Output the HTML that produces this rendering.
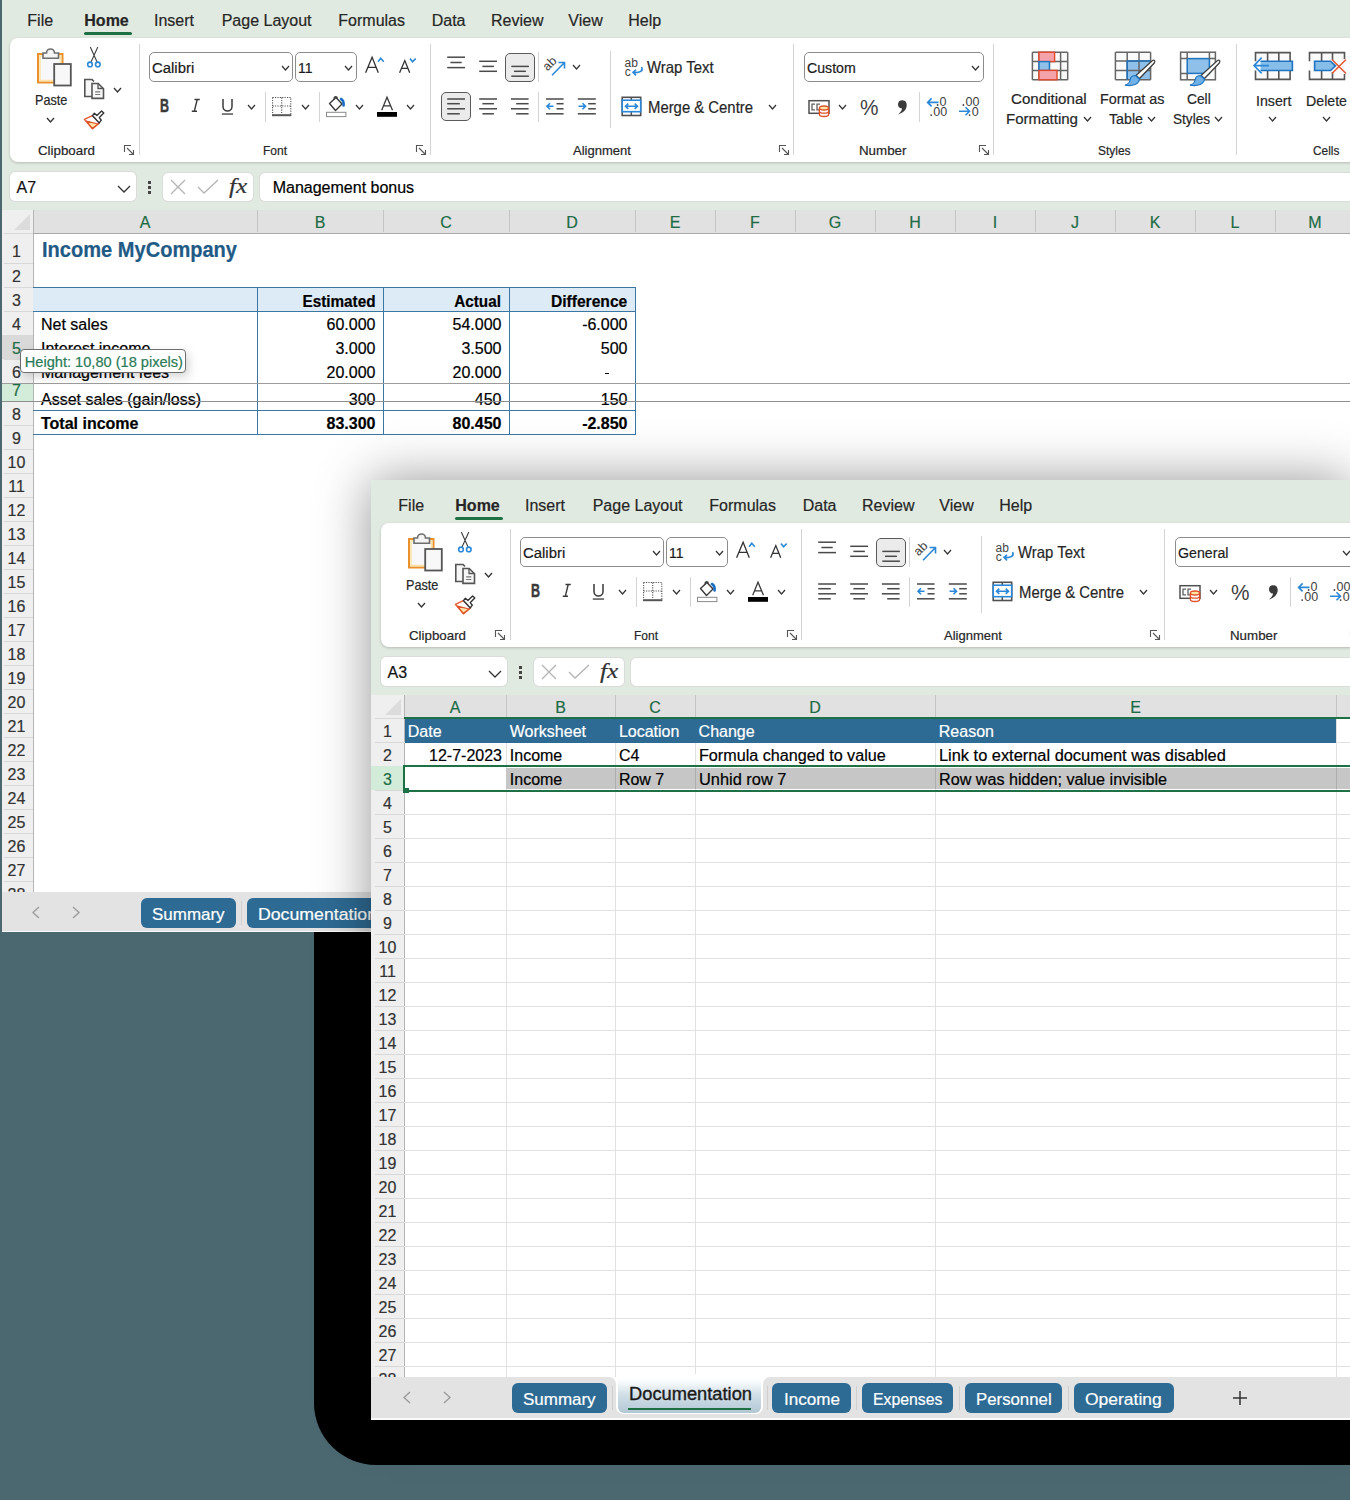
<!DOCTYPE html><html><head><meta charset="utf-8"><style>
html,body{margin:0;padding:0;}
body{width:1350px;height:1500px;overflow:hidden;position:relative;background:#4b6870;font-family:"Liberation Sans", sans-serif;}
.t{position:absolute;white-space:nowrap;-webkit-text-stroke:0.2px currentColor;}
.r{position:absolute;}
.s{position:absolute;overflow:visible;}
.win{position:absolute;overflow:hidden;}
</style></head><body><div class="r" style="left:314px;top:700px;width:1200px;height:765px;background:#000;border-bottom-left-radius:62px;"></div><div class="win" style="left:0;top:0;width:1350px;height:932px;"><div class="r" style="left:0px;top:-10px;width:1400px;height:942px;background:#e1eae0;"></div><div class="t" style="top:12.96px;font-size:16px;line-height:16px;color:#262626;left:27.30px;">File</div><div class="t" style="top:12.96px;font-size:16px;line-height:16px;color:#262626;font-weight:bold;left:84.30px;">Home</div><div class="t" style="top:12.96px;font-size:16px;line-height:16px;color:#262626;left:154.00px;">Insert</div><div class="t" style="top:12.96px;font-size:16px;line-height:16px;color:#262626;left:221.70px;">Page Layout</div><div class="t" style="top:12.96px;font-size:16px;line-height:16px;color:#262626;left:338.30px;">Formulas</div><div class="t" style="top:12.96px;font-size:16px;line-height:16px;color:#262626;left:431.70px;">Data</div><div class="t" style="top:12.96px;font-size:16px;line-height:16px;color:#262626;left:491.00px;">Review</div><div class="t" style="top:12.96px;font-size:16px;line-height:16px;color:#262626;left:568.30px;">View</div><div class="t" style="top:12.96px;font-size:16px;line-height:16px;color:#262626;left:628.30px;">Help</div><div class="r" style="left:84px;top:32px;width:48px;height:3px;background:#1e7145;border-radius:2px;"></div><div class="r" style="left:10px;top:38px;width:1400px;height:124px;background:#fff;border-radius:8px;box-shadow:0 1px 3px rgba(0,0,0,0.2);"></div><div class="t" style="top:143.80px;font-size:13px;line-height:13px;color:#262626;left:37.50px;transform:scaleX(1.0244);transform-origin:0 0;">Clipboard</div><div class="t" style="top:143.80px;font-size:13px;line-height:13px;color:#262626;left:262.70px;transform:scaleX(0.9227);transform-origin:0 0;">Font</div><div class="t" style="top:143.80px;font-size:13px;line-height:13px;color:#262626;left:573.00px;transform:scaleX(0.9999);transform-origin:0 0;">Alignment</div><div class="t" style="top:143.80px;font-size:13px;line-height:13px;color:#262626;left:859.20px;transform:scaleX(1.0252);transform-origin:0 0;">Number</div><div class="t" style="top:143.80px;font-size:13px;line-height:13px;color:#262626;left:1098.00px;transform:scaleX(0.9181);transform-origin:0 0;">Styles</div><div class="t" style="top:143.80px;font-size:13px;line-height:13px;color:#262626;left:1313.40px;transform:scaleX(0.9102);transform-origin:0 0;">Cells</div><div class="r" style="left:138.6px;top:44px;width:1px;height:111px;background:#d4d4d4;"></div><div class="r" style="left:430px;top:44px;width:1px;height:111px;background:#d4d4d4;"></div><div class="r" style="left:793px;top:44px;width:1px;height:111px;background:#d4d4d4;"></div><div class="r" style="left:1236.4px;top:44px;width:1px;height:111px;background:#d4d4d4;"></div><svg class="s" style="left:124px;top:145px;" width="11" height="11" viewBox="0 0 11 11"><path d="M0.5,7 V0.5 H7" fill="none" stroke="#555" stroke-width="1.1"/><path d="M3,3 L9.5,9.5 M9.5,5 V9.5 H5" fill="none" stroke="#555" stroke-width="1.1"/></svg><svg class="s" style="left:416px;top:145px;" width="11" height="11" viewBox="0 0 11 11"><path d="M0.5,7 V0.5 H7" fill="none" stroke="#555" stroke-width="1.1"/><path d="M3,3 L9.5,9.5 M9.5,5 V9.5 H5" fill="none" stroke="#555" stroke-width="1.1"/></svg><svg class="s" style="left:779px;top:145px;" width="11" height="11" viewBox="0 0 11 11"><path d="M0.5,7 V0.5 H7" fill="none" stroke="#555" stroke-width="1.1"/><path d="M3,3 L9.5,9.5 M9.5,5 V9.5 H5" fill="none" stroke="#555" stroke-width="1.1"/></svg><svg class="s" style="left:979px;top:145px;" width="11" height="11" viewBox="0 0 11 11"><path d="M0.5,7 V0.5 H7" fill="none" stroke="#555" stroke-width="1.1"/><path d="M3,3 L9.5,9.5 M9.5,5 V9.5 H5" fill="none" stroke="#555" stroke-width="1.1"/></svg><svg class="s" style="left:35px;top:46px;" width="38" height="42" viewBox="0 0 38 42"><rect x="3" y="8" width="24.5" height="28.5" fill="#f8f8fa" stroke="#e8912d" stroke-width="2"/><rect x="5" y="10" width="20.5" height="24.5" fill="none" stroke="#fde3a4" stroke-width="1.5"/><path d="M8,12.3 V7 H11.5 A4,4 0 0 1 19.5,7 H23.5 V12.3 Z" fill="#f4f4f4" stroke="#6e6e6e" stroke-width="1.6"/><rect x="19.2" y="18" width="16.6" height="21.5" fill="#f8f8f8" stroke="#555" stroke-width="1.8"/></svg><div class="t" style="top:93.23px;font-size:14.5px;line-height:14.5px;color:#262626;left:35.10px;transform:scaleX(0.8739);transform-origin:0 0;">Paste</div><svg class="s" style="left:46.0px;top:116.5px;" width="9" height="6" viewBox="0 0 9 6"><polyline points="1,1 4.5,5 8,1" fill="none" stroke="#333" stroke-width="1.3"/></svg><svg class="s" style="left:85px;top:45px;" width="16" height="24" viewBox="0 0 16 24"><path d="M5.3,2 L12.3,17.5 M12.8,2 L5.8,17.5" stroke="#404040" stroke-width="1.1" fill="none"/><circle cx="5" cy="19.4" r="2.3" fill="#fff" stroke="#2b88d8" stroke-width="1.6"/><circle cx="12.8" cy="19.4" r="2.3" fill="#fff" stroke="#2b88d8" stroke-width="1.6"/></svg><svg class="s" style="left:82px;top:77px;" width="24" height="24" viewBox="0 0 24 24"><path d="M10.5,19.5 H2.8 V2.5 H10 L12,4.5" fill="#f7f7f7" stroke="#555" stroke-width="1.6"/><path d="M10,6.5 H16.2 L21.5,11.8 V21.4 H10 Z" fill="#f7f7f7" stroke="#555" stroke-width="1.6"/><path d="M16,6.5 V11.5 H21.5" fill="none" stroke="#555" stroke-width="1.3"/><path d="M13.2,14.8 H18.3 M13.2,17.5 H18.3" stroke="#777" stroke-width="1.2"/></svg><svg class="s" style="left:112.8px;top:87.0px;" width="9" height="6" viewBox="0 0 9 6"><polyline points="1,1 4.5,5 8,1" fill="none" stroke="#333" stroke-width="1.3"/></svg><svg class="s" style="left:80px;top:106px;" width="26" height="26" viewBox="0 0 26 26"><path d="M4.4,13.3 L12.4,9.6 L19.3,16.9 L12.4,22.9 Z" fill="#fff" stroke="#e4572e" stroke-width="1.3" stroke-linejoin="round"/><path d="M6.3,15.2 L18.2,18 L12.4,22.3 Z" fill="#fde3a4" stroke="#e0502a" stroke-width="1.2" stroke-linejoin="round"/><path d="M12.4,9.6 L14.4,7.3 L16.9,9.6 L21.6,5.1 L23.8,7.1 L19.3,11.6 L21.3,14.2 L19.3,16.9 Z" fill="#fff" stroke="#333" stroke-width="1.4" stroke-linejoin="round"/></svg><div class="r" style="left:149px;top:52px;width:144px;height:30px;background:#fff;border:1px solid #8c8c8c;border-radius:5px;box-sizing:border-box;"></div><div class="t" style="top:60.38px;font-size:15.5px;line-height:15.5px;color:#1a1a1a;left:152.20px;transform:scaleX(0.9607);transform-origin:0 0;">Calibri</div><svg class="s" style="left:281.0px;top:64.5px;" width="9" height="6" viewBox="0 0 9 6"><polyline points="1,1 4.5,5 8,1" fill="none" stroke="#333" stroke-width="1.2"/></svg><div class="r" style="left:295px;top:52px;width:62px;height:30px;background:#fff;border:1px solid #8c8c8c;border-radius:5px;box-sizing:border-box;"></div><div class="t" style="top:60.38px;font-size:15.5px;line-height:15.5px;color:#1a1a1a;left:298.40px;transform:scaleX(0.9013);transform-origin:0 0;">11</div><svg class="s" style="left:344.4px;top:64.5px;" width="9" height="6" viewBox="0 0 9 6"><polyline points="1,1 4.5,5 8,1" fill="none" stroke="#333" stroke-width="1.2"/></svg><svg class="s" style="left:363px;top:55px;" width="24" height="20" viewBox="0 0 24 20"><path d="M2.6,17.8 L9.1,2.3 L15.3,17.8 M5,12.4 H13.2" fill="none" stroke="#333" stroke-width="1.3"/><path d="M15.1,6.7 L17.7,3.3 L20.8,6.7" fill="none" stroke="#2b88d8" stroke-width="1.6"/></svg><svg class="s" style="left:397px;top:55px;" width="22" height="20" viewBox="0 0 22 20"><path d="M2.6,17.8 L7.8,5.6 L12.7,17.8 M4.6,13.4 H10.8" fill="none" stroke="#333" stroke-width="1.3"/><path d="M13,3.6 L15.5,6.7 L18.7,3.6" fill="none" stroke="#2b88d8" stroke-width="1.6"/></svg><div class="t" style="top:96.94px;font-size:18.5px;line-height:18.5px;color:#3a3a3a;font-weight:bold;left:159.80px;transform:scaleX(0.6736);transform-origin:0 0;-webkit-text-stroke:0.5px #3a3a3a;">B</div><svg class="s" style="left:188px;top:96px;" width="14" height="18" viewBox="0 0 14 18"><path d="M6.5,3.5 H11.8 M3.8,15.3 H9 M9.2,3.5 L6.3,15.3" fill="none" stroke="#3a3a3a" stroke-width="1.4"/></svg><svg class="s" style="left:220px;top:97px;" width="15" height="19" viewBox="0 0 15 19"><path d="M3,2 V9.5 A4.5,4.5 0 0 0 12,9.5 V2" fill="none" stroke="#3a3a3a" stroke-width="1.5"/><rect x="1.8" y="16.3" width="11.3" height="1.5" fill="#555"/></svg><svg class="s" style="left:246.9px;top:103.8px;" width="9" height="6" viewBox="0 0 9 6"><polyline points="1,1 4.5,5 8,1" fill="none" stroke="#333" stroke-width="1.2"/></svg><div class="r" style="left:264.5px;top:92px;width:1px;height:30px;background:#d4d4d4;"></div><svg class="s" style="left:271px;top:96px;" width="22" height="21" viewBox="0 0 22 21"><path d="M1.6,1.5 H19.8 V18.5 M1.6,1.5 V18.5 M10.7,1.5 V18.5 M1.6,10 H19.8" fill="none" stroke="#555" stroke-width="1.1" stroke-dasharray="1.2,1.2"/><rect x="1" y="18.2" width="19.4" height="2" fill="#555"/></svg><svg class="s" style="left:300.9px;top:103.8px;" width="9" height="6" viewBox="0 0 9 6"><polyline points="1,1 4.5,5 8,1" fill="none" stroke="#333" stroke-width="1.2"/></svg><div class="r" style="left:318.6px;top:92px;width:1px;height:30px;background:#d4d4d4;"></div><svg class="s" style="left:325px;top:95px;" width="23" height="23" viewBox="0 0 23 23"><path d="M4.5,8.5 L11,2.5 L17,9 L10.5,15.5 Z" fill="#fff" stroke="#3a3a3a" stroke-width="1.4" stroke-linejoin="round"/><path d="M9.5,4.5 C8,1.5 11.5,0.5 12.5,3.5" fill="none" stroke="#3a3a3a" stroke-width="1.3"/><path d="M16,4 C18,5 18.8,7 18.6,10.5" fill="none" stroke="#1a6fc4" stroke-width="2.6" stroke-linecap="round"/><rect x="1.5" y="17.3" width="19.4" height="4.3" fill="#fff" stroke="#8a8a8a" stroke-width="1"/></svg><svg class="s" style="left:354.9px;top:103.8px;" width="9" height="6" viewBox="0 0 9 6"><polyline points="1,1 4.5,5 8,1" fill="none" stroke="#333" stroke-width="1.2"/></svg><svg class="s" style="left:376px;top:95px;" width="22" height="23" viewBox="0 0 22 23"><path d="M5.7,15.3 L11,2.3 L16.5,15.3 M7.6,10.8 H14.6" fill="none" stroke="#3a3a3a" stroke-width="1.3"/><rect x="1" y="17" width="20" height="4.8" fill="#000"/></svg><svg class="s" style="left:405.8px;top:103.8px;" width="9" height="6" viewBox="0 0 9 6"><polyline points="1,1 4.5,5 8,1" fill="none" stroke="#333" stroke-width="1.2"/></svg><div class="r" style="left:505.3px;top:52.5px;width:29.3px;height:29px;background:#ebebeb;border:1px solid #5a5a5a;border-radius:5px;box-sizing:border-box;"></div><div class="r" style="left:441.3px;top:92.4px;width:29.3px;height:29.1px;background:#ebebeb;border:1px solid #5a5a5a;border-radius:5px;box-sizing:border-box;"></div><svg class="s" style="left:0px;top:0px;pointer-events:none;" width="800" height="130" viewBox="0 0 800 130"><rect x="447.20" y="56.45" width="17.80" height="1.5" fill="#4a4a4a"/><rect x="450.40" y="61.75" width="11.30" height="1.5" fill="#4a4a4a"/><rect x="447.20" y="66.85" width="17.80" height="1.5" fill="#4a4a4a"/><rect x="479.20" y="60.55" width="17.80" height="1.5" fill="#4a4a4a"/><rect x="482.40" y="65.65" width="11.50" height="1.5" fill="#4a4a4a"/><rect x="479.20" y="70.55" width="17.80" height="1.5" fill="#4a4a4a"/><rect x="511.30" y="65.65" width="17.60" height="1.5" fill="#4a4a4a"/><rect x="514.00" y="70.55" width="11.90" height="1.5" fill="#4a4a4a"/><rect x="511.30" y="75.45" width="17.60" height="1.5" fill="#4a4a4a"/><rect x="447.20" y="98.25" width="17.80" height="1.5" fill="#4a4a4a"/><rect x="447.20" y="102.95" width="12.60" height="1.5" fill="#4a4a4a"/><rect x="447.20" y="108.05" width="17.80" height="1.5" fill="#4a4a4a"/><rect x="447.20" y="113.05" width="12.60" height="1.5" fill="#4a4a4a"/><rect x="479.20" y="98.25" width="17.80" height="1.5" fill="#4a4a4a"/><rect x="482.40" y="102.95" width="11.50" height="1.5" fill="#4a4a4a"/><rect x="479.20" y="108.05" width="17.80" height="1.5" fill="#4a4a4a"/><rect x="482.40" y="113.05" width="11.50" height="1.5" fill="#4a4a4a"/><rect x="510.90" y="98.25" width="17.70" height="1.5" fill="#4a4a4a"/><rect x="516.20" y="102.95" width="12.40" height="1.5" fill="#4a4a4a"/><rect x="510.90" y="108.05" width="17.70" height="1.5" fill="#4a4a4a"/><rect x="516.20" y="113.05" width="12.40" height="1.5" fill="#4a4a4a"/><rect x="546.00" y="98.25" width="17.60" height="1.5" fill="#4a4a4a"/><rect x="556.50" y="102.95" width="7.10" height="1.5" fill="#4a4a4a"/><rect x="556.50" y="108.05" width="7.10" height="1.5" fill="#4a4a4a"/><rect x="546.00" y="113.05" width="17.60" height="1.5" fill="#4a4a4a"/><rect x="577.80" y="98.25" width="18.00" height="1.5" fill="#4a4a4a"/><rect x="588.20" y="102.95" width="7.60" height="1.5" fill="#4a4a4a"/><rect x="588.20" y="108.05" width="7.60" height="1.5" fill="#4a4a4a"/><rect x="577.80" y="113.05" width="18.00" height="1.5" fill="#4a4a4a"/><path d="M553.5,106.2 H547 M550,103.2 L547,106.2 L550,109.2" fill="none" stroke="#2b88d8" stroke-width="1.6"/><path d="M578.5,106.2 H585.5 M582.5,103.2 L585.5,106.2 L582.5,109.2" fill="none" stroke="#2b88d8" stroke-width="1.6"/><path d="M552,75.3 L564.5,62.5 M558.5,62.5 H564.5 V68.5" fill="none" stroke="#2b88d8" stroke-width="1.6"/><text x="0" y="0" transform="translate(547.5,71.5) rotate(-45)" font-family="Liberation Sans" font-size="12.5" fill="#444">ab</text></svg><div class="r" style="left:537.5px;top:52px;width:1px;height:30px;background:#d4d4d4;"></div><div class="r" style="left:537.5px;top:92px;width:1px;height:30px;background:#d4d4d4;"></div><svg class="s" style="left:571.8px;top:63.5px;" width="9" height="6" viewBox="0 0 9 6"><polyline points="1,1 4.5,5 8,1" fill="none" stroke="#333" stroke-width="1.2"/></svg><div class="r" style="left:609.5px;top:51px;width:1px;height:77px;background:#d4d4d4;"></div><svg class="s" style="left:620px;top:52px;" width="26" height="28" viewBox="0 0 26 28"><text x="4.5" y="14.6" font-family="Liberation Sans" font-size="12" fill="#444">ab</text><text x="4.8" y="23.9" font-family="Liberation Sans" font-size="12" fill="#444">c</text><path d="M21.6,15 C23.5,19 20,21 13.5,20.5 M16,17.8 L13,20.4 L16,23.4" fill="none" stroke="#2b88d8" stroke-width="1.6"/></svg><div class="t" style="top:59.33px;font-size:16.5px;line-height:16.5px;color:#262626;left:647.20px;transform:scaleX(0.9041);transform-origin:0 0;">Wrap Text</div><svg class="s" style="left:620px;top:95px;" width="23" height="23" viewBox="0 0 23 23"><rect x="2.2" y="2.3" width="18.5" height="18.2" fill="#fff" stroke="#505050" stroke-width="1.6"/><path d="M11.3,2.3 V5.2 M11.3,16.7 V20.5" stroke="#505050" stroke-width="1.5"/><rect x="2.2" y="5.2" width="18.5" height="11.5" fill="#fff" stroke="#2b88d8" stroke-width="1.6"/><path d="M5.5,11.2 H17.5 M8.3,8.6 L5.5,11.2 L8.3,13.8 M14.7,8.6 L17.5,11.2 L14.7,13.8" fill="none" stroke="#2b88d8" stroke-width="1.6"/></svg><div class="t" style="top:99.33px;font-size:16.5px;line-height:16.5px;color:#262626;left:647.80px;transform:scaleX(0.9016);transform-origin:0 0;">Merge &amp; Centre</div><svg class="s" style="left:768.0px;top:104.3px;" width="9" height="6" viewBox="0 0 9 6"><polyline points="1,1 4.5,5 8,1" fill="none" stroke="#333" stroke-width="1.2"/></svg><div class="r" style="left:804.3px;top:52px;width:179.70000000000005px;height:30px;background:#fff;border:1px solid #8c8c8c;border-radius:5px;box-sizing:border-box;"></div><div class="t" style="top:60.38px;font-size:15.5px;line-height:15.5px;color:#1a1a1a;left:807.40px;transform:scaleX(0.9120);transform-origin:0 0;">Custom</div><svg class="s" style="left:971.3px;top:64.5px;" width="9" height="6" viewBox="0 0 9 6"><polyline points="1,1 4.5,5 8,1" fill="none" stroke="#333" stroke-width="1.2"/></svg><svg class="s" style="left:807px;top:98px;" width="24" height="21" viewBox="0 0 24 21"><rect x="2" y="2.7" width="20" height="12.6" fill="#fff" stroke="#505050" stroke-width="1.5"/><path d="M8,6.2 H5 V11.8 H8 M13,6.2 H10 V11.8 H13" fill="none" stroke="#606060" stroke-width="1.3"/><path d="M12.4,10 V16.5 A4.6,2 0 0 0 21.6,16.5 V10" fill="#fff" stroke="#e0502a" stroke-width="1.3"/><ellipse cx="17" cy="10" rx="4.6" ry="2" fill="#fde3a4" stroke="#e0502a" stroke-width="1.3"/><path d="M12.4,13.2 A4.6,2 0 0 0 21.6,13.2" fill="none" stroke="#e0502a" stroke-width="1.2"/></svg><svg class="s" style="left:837.9px;top:103.8px;" width="9" height="6" viewBox="0 0 9 6"><polyline points="1,1 4.5,5 8,1" fill="none" stroke="#333" stroke-width="1.2"/></svg><div class="t" style="top:96.88px;font-size:22px;line-height:22px;color:#404040;left:860.30px;transform:scaleX(0.9457);transform-origin:0 0;-webkit-text-stroke:0;">%</div><svg class="s" style="left:895px;top:98px;" width="14" height="19" viewBox="0 0 14 19"><path d="M7.2,2.2 C10.8,2.2 12.2,5 11.6,8.5 C11,12 8,15 3,16.5 C5.8,14 7,12.3 7,10.5 C4.2,10.5 3,8.5 3,6.3 C3,3.8 4.8,2.2 7.2,2.2 Z" fill="#3a3a3a"/></svg><div class="r" style="left:919.4px;top:92px;width:1px;height:30px;background:#d4d4d4;"></div><svg class="s" style="left:920px;top:92px;" width="65" height="28" viewBox="0 0 65 28"><text x="19.4" y="13.8" font-family="Liberation Sans" font-size="12.5" fill="#404040">0</text><text x="13.3" y="23.9" font-family="Liberation Sans" font-size="12.5" fill="#404040">00</text><text x="45.6" y="13.8" font-family="Liberation Sans" font-size="12.5" fill="#404040">00</text><text x="51.8" y="23.9" font-family="Liberation Sans" font-size="12.5" fill="#404040">0</text><circle cx="17.6" cy="13" r="0.9" fill="#404040"/><circle cx="11.2" cy="23.1" r="0.9" fill="#404040"/><circle cx="43.4" cy="13" r="0.9" fill="#404040"/><circle cx="49.6" cy="23.1" r="0.9" fill="#404040"/><path d="M18.5,10.4 H7.8 M11.6,6.4 L7.6,10.4 L11.6,14.4" fill="none" stroke="#2b88d8" stroke-width="1.6"/><path d="M39,19.3 H49.3 M45.5,15.3 L49.5,19.3 L45.5,23.3" fill="none" stroke="#2b88d8" stroke-width="1.6"/></svg><div class="r" style="left:993px;top:44px;width:1px;height:111px;background:#d4d4d4;"></div><svg class="s" style="left:0px;top:0px;pointer-events:none;" width="1350" height="100" viewBox="0 0 1350 100"><rect x="1032.4" y="52.2" width="35.3" height="27.6" fill="#fafafa"/><g stroke="#666" stroke-width="1.5" fill="none"><path d="M1032.4,52.2 V79.8"/><path d="M1039,52.2 V79.8"/><path d="M1049.4,52.2 V79.8"/><path d="M1060.6,52.2 V79.8"/><path d="M1067.7,52.2 V79.8"/><path d="M1032.4,52.2 H1067.7"/><path d="M1032.4,61.6 H1067.7"/><path d="M1032.4,70.4 H1067.7"/><path d="M1032.4,79.8 H1067.7"/></g><rect x="1039" y="52.2" width="15.6" height="9.4" fill="#f4a3aa" stroke="#e0482a" stroke-width="1.4"/><rect x="1039" y="61.6" width="10.4" height="8.8" fill="#8ec0ea" stroke="#1e73be" stroke-width="1.4"/><rect x="1039" y="70.4" width="18" height="9.4" fill="#f4a3aa" stroke="#e0482a" stroke-width="1.4"/><rect x="1115.4" y="52.2" width="35.2" height="27.6" fill="#fafafa"/><rect x="1127.2" y="61.1" width="23.4" height="18.7" fill="#8ec0ea"/><g stroke="#666" stroke-width="1.5" fill="none"><path d="M1115.4,52.2 V79.8"/><path d="M1127.2,52.2 V79.8"/><path d="M1139,52.2 V79.8"/><path d="M1150.6,52.2 V79.8"/><path d="M1115.4,52.2 H1150.6"/><path d="M1115.4,61.1 H1150.6"/><path d="M1115.4,70.4 H1150.6"/><path d="M1115.4,79.8 H1150.6"/></g><path d="M1127.2,79.8 V61.1 H1150.6" fill="none" stroke="#1e73be" stroke-width="1.5"/><path d="M1152.5,60.5 C1154.5,59.5 1155.5,61 1154.3,63 L1139.5,78.5 L1136,75.5 Z" fill="#fff" stroke="#404040" stroke-width="1.3"/><path d="M1135.5,75.5 L1139.5,79 C1139,84 1133,86.5 1125,85.2 C1129,84 1129.5,82.5 1130,80 C1130.5,77 1133,75.5 1135.5,75.5 Z" fill="#6fb0e6" stroke="#1e73be" stroke-width="1.2"/><rect x="1180.6" y="52.2" width="34.8" height="27.6" fill="#fafafa"/><rect x="1187.2" y="58.6" width="22.2" height="14.8" fill="#8ec0ea" stroke="#1e73be" stroke-width="1.5"/><g stroke="#666" stroke-width="1.5" fill="none"><rect x="1180.6" y="52.2" width="34.8" height="27.6"/><path d="M1187.2,52.2 V58.6 M1209.4,52.2 V58.6 M1180.6,58.6 H1187.2 M1209.4,58.6 H1215.4 M1180.6,73.4 H1187.2 M1187.2,73.4 V79.8"/></g><path d="M1217.5,60.5 C1219.5,59.5 1220.5,61 1219.3,63 L1204.5,78.5 L1201,75.5 Z" fill="#fff" stroke="#404040" stroke-width="1.3"/><path d="M1200.5,75.5 L1204.5,79 C1204,84 1198,86.5 1190,85.2 C1194,84 1194.5,82.5 1195,80 C1195.5,77 1198,75.5 1200.5,75.5 Z" fill="#6fb0e6" stroke="#1e73be" stroke-width="1.2"/><rect x="1255.5" y="52.6" width="34.6" height="26.8" fill="#fafafa"/><g stroke="#555" stroke-width="1.6" fill="none"><path d="M1255.5,61.2 V52.6 H1290.1 V79.4 H1255.5 V70.5 M1267.6,52.6 V79.4 M1278.8,52.6 V79.4"/></g><path d="M1260.6,61.2 H1292.4 V70.5 H1260.6" fill="#86bde9" stroke="#1f73c0" stroke-width="1.6"/><path d="M1254,65.6 H1269 M1261.7,57.6 L1254,65.6 L1261.7,73.4" fill="none" stroke="#2b88d8" stroke-width="1.6"/><rect x="1309.5" y="52.6" width="35" height="26.8" fill="#fafafa"/><g stroke="#555" stroke-width="1.6" fill="none"><path d="M1309.5,61.2 V52.6 H1344.5 V59 M1344.5,74 V79.4 H1309.5 V70.5 M1321.6,52.6 V79.4 M1332.5,52.6 V60 M1332.5,72 V79.4"/></g><path d="M1314.6,61.2 H1330.5 L1335.5,65.8 L1330.5,70.5 H1314.6 Z" fill="#86bde9" stroke="#1f73c0" stroke-width="1.6"/><path d="M1332,59.5 L1346,73.5 M1346,59.5 L1332,73.5" stroke="#e4572e" stroke-width="1.5"/></svg><div class="t" style="top:91.05px;font-size:15.3px;line-height:15.3px;color:#262626;left:1011.30px;transform:scaleX(0.9889);transform-origin:0 0;">Conditional</div><div class="t" style="top:111.25px;font-size:15.3px;line-height:15.3px;color:#262626;left:1006.00px;transform:scaleX(0.9847);transform-origin:0 0;">Formatting</div><svg class="s" style="left:1083.0px;top:116.3px;" width="9" height="6" viewBox="0 0 9 6"><polyline points="1,1 4.5,5 8,1" fill="none" stroke="#333" stroke-width="1.2"/></svg><div class="t" style="top:91.05px;font-size:15.3px;line-height:15.3px;color:#262626;left:1100.30px;transform:scaleX(0.9352);transform-origin:0 0;">Format as</div><div class="t" style="top:111.25px;font-size:15.3px;line-height:15.3px;color:#262626;left:1108.70px;transform:scaleX(0.9296);transform-origin:0 0;">Table</div><svg class="s" style="left:1146.5px;top:116.3px;" width="9" height="6" viewBox="0 0 9 6"><polyline points="1,1 4.5,5 8,1" fill="none" stroke="#333" stroke-width="1.2"/></svg><div class="t" style="top:91.05px;font-size:15.3px;line-height:15.3px;color:#262626;left:1186.60px;transform:scaleX(0.8992);transform-origin:0 0;">Cell</div><div class="t" style="top:111.25px;font-size:15.3px;line-height:15.3px;color:#262626;left:1172.60px;transform:scaleX(0.8881);transform-origin:0 0;">Styles</div><svg class="s" style="left:1213.9px;top:116.3px;" width="9" height="6" viewBox="0 0 9 6"><polyline points="1,1 4.5,5 8,1" fill="none" stroke="#333" stroke-width="1.2"/></svg><div class="t" style="top:92.85px;font-size:15.3px;line-height:15.3px;color:#262626;left:1255.50px;transform:scaleX(0.9278);transform-origin:0 0;">Insert</div><svg class="s" style="left:1268.1px;top:116.3px;" width="9" height="6" viewBox="0 0 9 6"><polyline points="1,1 4.5,5 8,1" fill="none" stroke="#333" stroke-width="1.2"/></svg><div class="t" style="top:92.85px;font-size:15.3px;line-height:15.3px;color:#262626;left:1305.50px;transform:scaleX(0.9271);transform-origin:0 0;">Delete</div><svg class="s" style="left:1322.0px;top:116.3px;" width="9" height="6" viewBox="0 0 9 6"><polyline points="1,1 4.5,5 8,1" fill="none" stroke="#333" stroke-width="1.2"/></svg><div class="r" style="left:10px;top:172px;width:126px;height:29px;background:#fff;border-radius:5px;box-shadow:0 0 0 1px #d9dcd8;"></div><div class="t" style="top:180.46px;font-size:16px;line-height:16px;color:#111;left:16.50px;">A7</div><svg class="s" style="left:117.0px;top:185.0px;" width="14" height="8" viewBox="0 0 14 8"><polyline points="1,1 7.0,7 13,1" fill="none" stroke="#333" stroke-width="1.3"/></svg><div class="r" style="left:148px;top:181px;width:3px;height:3px;background:#444;"></div><div class="r" style="left:148px;top:186px;width:3px;height:3px;background:#444;"></div><div class="r" style="left:148px;top:191px;width:3px;height:3px;background:#444;"></div><div class="r" style="left:163px;top:173px;width:90px;height:28px;background:#fff;border-radius:5px;box-shadow:0 0 0 1px #d9dcd8;"></div><svg class="s" style="left:170px;top:179px;" width="16" height="16" viewBox="0 0 16 16"><path d="M1,1 L15,15 M15,1 L1,15" stroke="#b4b4b4" stroke-width="1.3"/></svg><svg class="s" style="left:197px;top:179px;" width="22" height="16" viewBox="0 0 22 16"><path d="M1,8 L7,14 L21,1" fill="none" stroke="#b4b4b4" stroke-width="1.3"/></svg><div class="t" style="top:175.72px;font-size:21px;line-height:21px;color:#333;left:229.00px;transform:scaleX(1.2000);transform-origin:0 0;font-family:'Liberation Serif';font-style:italic;">fx</div><div class="r" style="left:260px;top:173px;width:1400px;height:28px;background:#fff;border-radius:5px;box-shadow:0 0 0 1px #d9dcd8;"></div><div class="t" style="top:179.76px;font-size:16px;line-height:16px;color:#000;left:272.70px;">Management bonus</div><div class="r" style="left:0px;top:210px;width:1400px;height:23px;background:#e1e1e1;"></div><div class="r" style="left:0px;top:210px;width:33px;height:24px;background:#efefef;"></div><svg class="s" style="left:14px;top:214px;" width="17" height="16" viewBox="0 0 17 16"><polygon points="16,0 16,16 0,16" fill="#dcdcdc"/></svg><div class="r" style="left:33px;top:233px;width:1400px;height:659px;background:#fff;"></div><div class="r" style="left:0px;top:233px;width:33px;height:659px;background:#efefef;"></div><div class="r" style="left:33px;top:210px;width:1px;height:682px;background:#b5b5b5;"></div><div class="r" style="left:4px;top:233px;width:29px;height:1px;background:#d8d8d8;"></div><div class="r" style="left:33px;top:233px;width:1400px;height:1px;background:#a8a8a8;"></div><div class="r" style="left:257px;top:210px;width:1px;height:22px;background:#c4c4c4;"></div><div class="t" style="top:215.26px;font-size:16px;line-height:16px;color:#1d6b45;left:-155.00px;width:600px;text-align:center;">A</div><div class="r" style="left:383px;top:210px;width:1px;height:22px;background:#c4c4c4;"></div><div class="t" style="top:215.26px;font-size:16px;line-height:16px;color:#1d6b45;left:20.00px;width:600px;text-align:center;">B</div><div class="r" style="left:509px;top:210px;width:1px;height:22px;background:#c4c4c4;"></div><div class="t" style="top:215.26px;font-size:16px;line-height:16px;color:#1d6b45;left:146.00px;width:600px;text-align:center;">C</div><div class="r" style="left:635px;top:210px;width:1px;height:22px;background:#c4c4c4;"></div><div class="t" style="top:215.26px;font-size:16px;line-height:16px;color:#1d6b45;left:272.00px;width:600px;text-align:center;">D</div><div class="r" style="left:715px;top:210px;width:1px;height:22px;background:#c4c4c4;"></div><div class="t" style="top:215.26px;font-size:16px;line-height:16px;color:#1d6b45;left:375.00px;width:600px;text-align:center;">E</div><div class="r" style="left:795px;top:210px;width:1px;height:22px;background:#c4c4c4;"></div><div class="t" style="top:215.26px;font-size:16px;line-height:16px;color:#1d6b45;left:455.00px;width:600px;text-align:center;">F</div><div class="r" style="left:875px;top:210px;width:1px;height:22px;background:#c4c4c4;"></div><div class="t" style="top:215.26px;font-size:16px;line-height:16px;color:#1d6b45;left:535.00px;width:600px;text-align:center;">G</div><div class="r" style="left:955px;top:210px;width:1px;height:22px;background:#c4c4c4;"></div><div class="t" style="top:215.26px;font-size:16px;line-height:16px;color:#1d6b45;left:615.00px;width:600px;text-align:center;">H</div><div class="r" style="left:1035px;top:210px;width:1px;height:22px;background:#c4c4c4;"></div><div class="t" style="top:215.26px;font-size:16px;line-height:16px;color:#1d6b45;left:695.00px;width:600px;text-align:center;">I</div><div class="r" style="left:1115px;top:210px;width:1px;height:22px;background:#c4c4c4;"></div><div class="t" style="top:215.26px;font-size:16px;line-height:16px;color:#1d6b45;left:775.00px;width:600px;text-align:center;">J</div><div class="r" style="left:1195px;top:210px;width:1px;height:22px;background:#c4c4c4;"></div><div class="t" style="top:215.26px;font-size:16px;line-height:16px;color:#1d6b45;left:855.00px;width:600px;text-align:center;">K</div><div class="r" style="left:1275px;top:210px;width:1px;height:22px;background:#c4c4c4;"></div><div class="t" style="top:215.26px;font-size:16px;line-height:16px;color:#1d6b45;left:935.00px;width:600px;text-align:center;">L</div><div class="r" style="left:1355px;top:210px;width:1px;height:22px;background:#c4c4c4;"></div><div class="t" style="top:215.26px;font-size:16px;line-height:16px;color:#1d6b45;left:1015.00px;width:600px;text-align:center;">M</div><div class="r" style="left:4px;top:263px;width:29px;height:1px;background:#d8d8d8;"></div><div class="t" style="top:244.46px;font-size:16px;line-height:16px;color:#333;left:-283.50px;width:600px;text-align:center;">1</div><div class="r" style="left:4px;top:287px;width:29px;height:1px;background:#d8d8d8;"></div><div class="t" style="top:269.46px;font-size:16px;line-height:16px;color:#333;left:-283.50px;width:600px;text-align:center;">2</div><div class="r" style="left:4px;top:311px;width:29px;height:1px;background:#d8d8d8;"></div><div class="t" style="top:293.46px;font-size:16px;line-height:16px;color:#333;left:-283.50px;width:600px;text-align:center;">3</div><div class="r" style="left:4px;top:335px;width:29px;height:1px;background:#d8d8d8;"></div><div class="t" style="top:317.46px;font-size:16px;line-height:16px;color:#333;left:-283.50px;width:600px;text-align:center;">4</div><div class="r" style="left:0px;top:335px;width:33px;height:24px;background:#d9d9d9;"></div><div class="r" style="left:4px;top:359px;width:29px;height:1px;background:#d8d8d8;"></div><div class="t" style="top:341.46px;font-size:16px;line-height:16px;color:#1d6b45;left:-283.50px;width:600px;text-align:center;">5</div><div class="r" style="left:4px;top:383px;width:29px;height:1px;background:#d8d8d8;"></div><div class="t" style="top:365.46px;font-size:16px;line-height:16px;color:#333;left:-283.50px;width:600px;text-align:center;">6</div><div class="r" style="left:0px;top:383px;width:33px;height:18px;background:#d3ebd9;"></div><div class="r" style="left:4px;top:401px;width:29px;height:1px;background:#d8d8d8;"></div><div class="t" style="top:382.96px;font-size:16px;line-height:16px;color:#1d6b45;left:-283.50px;width:600px;text-align:center;">7</div><div class="r" style="left:4px;top:425px;width:29px;height:1px;background:#d8d8d8;"></div><div class="t" style="top:407.46px;font-size:16px;line-height:16px;color:#333;left:-283.50px;width:600px;text-align:center;">8</div><div class="r" style="left:4px;top:449px;width:29px;height:1px;background:#d8d8d8;"></div><div class="t" style="top:431.46px;font-size:16px;line-height:16px;color:#333;left:-283.50px;width:600px;text-align:center;">9</div><div class="r" style="left:4px;top:473px;width:29px;height:1px;background:#d8d8d8;"></div><div class="t" style="top:455.46px;font-size:16px;line-height:16px;color:#333;left:-283.50px;width:600px;text-align:center;">10</div><div class="r" style="left:4px;top:497px;width:29px;height:1px;background:#d8d8d8;"></div><div class="t" style="top:479.46px;font-size:16px;line-height:16px;color:#333;left:-283.50px;width:600px;text-align:center;">11</div><div class="r" style="left:4px;top:521px;width:29px;height:1px;background:#d8d8d8;"></div><div class="t" style="top:503.46px;font-size:16px;line-height:16px;color:#333;left:-283.50px;width:600px;text-align:center;">12</div><div class="r" style="left:4px;top:545px;width:29px;height:1px;background:#d8d8d8;"></div><div class="t" style="top:527.46px;font-size:16px;line-height:16px;color:#333;left:-283.50px;width:600px;text-align:center;">13</div><div class="r" style="left:4px;top:569px;width:29px;height:1px;background:#d8d8d8;"></div><div class="t" style="top:551.46px;font-size:16px;line-height:16px;color:#333;left:-283.50px;width:600px;text-align:center;">14</div><div class="r" style="left:4px;top:593px;width:29px;height:1px;background:#d8d8d8;"></div><div class="t" style="top:575.46px;font-size:16px;line-height:16px;color:#333;left:-283.50px;width:600px;text-align:center;">15</div><div class="r" style="left:4px;top:617px;width:29px;height:1px;background:#d8d8d8;"></div><div class="t" style="top:599.46px;font-size:16px;line-height:16px;color:#333;left:-283.50px;width:600px;text-align:center;">16</div><div class="r" style="left:4px;top:641px;width:29px;height:1px;background:#d8d8d8;"></div><div class="t" style="top:623.46px;font-size:16px;line-height:16px;color:#333;left:-283.50px;width:600px;text-align:center;">17</div><div class="r" style="left:4px;top:665px;width:29px;height:1px;background:#d8d8d8;"></div><div class="t" style="top:647.46px;font-size:16px;line-height:16px;color:#333;left:-283.50px;width:600px;text-align:center;">18</div><div class="r" style="left:4px;top:689px;width:29px;height:1px;background:#d8d8d8;"></div><div class="t" style="top:671.46px;font-size:16px;line-height:16px;color:#333;left:-283.50px;width:600px;text-align:center;">19</div><div class="r" style="left:4px;top:713px;width:29px;height:1px;background:#d8d8d8;"></div><div class="t" style="top:695.46px;font-size:16px;line-height:16px;color:#333;left:-283.50px;width:600px;text-align:center;">20</div><div class="r" style="left:4px;top:737px;width:29px;height:1px;background:#d8d8d8;"></div><div class="t" style="top:719.46px;font-size:16px;line-height:16px;color:#333;left:-283.50px;width:600px;text-align:center;">21</div><div class="r" style="left:4px;top:761px;width:29px;height:1px;background:#d8d8d8;"></div><div class="t" style="top:743.46px;font-size:16px;line-height:16px;color:#333;left:-283.50px;width:600px;text-align:center;">22</div><div class="r" style="left:4px;top:785px;width:29px;height:1px;background:#d8d8d8;"></div><div class="t" style="top:767.46px;font-size:16px;line-height:16px;color:#333;left:-283.50px;width:600px;text-align:center;">23</div><div class="r" style="left:4px;top:809px;width:29px;height:1px;background:#d8d8d8;"></div><div class="t" style="top:791.46px;font-size:16px;line-height:16px;color:#333;left:-283.50px;width:600px;text-align:center;">24</div><div class="r" style="left:4px;top:833px;width:29px;height:1px;background:#d8d8d8;"></div><div class="t" style="top:815.46px;font-size:16px;line-height:16px;color:#333;left:-283.50px;width:600px;text-align:center;">25</div><div class="r" style="left:4px;top:857px;width:29px;height:1px;background:#d8d8d8;"></div><div class="t" style="top:839.46px;font-size:16px;line-height:16px;color:#333;left:-283.50px;width:600px;text-align:center;">26</div><div class="r" style="left:4px;top:881px;width:29px;height:1px;background:#d8d8d8;"></div><div class="t" style="top:863.46px;font-size:16px;line-height:16px;color:#333;left:-283.50px;width:600px;text-align:center;">27</div><div class="r" style="left:4px;top:905px;width:29px;height:1px;background:#d8d8d8;"></div><div class="t" style="top:887.46px;font-size:16px;line-height:16px;color:#333;left:-283.50px;width:600px;text-align:center;">28</div><div class="t" style="top:238.68px;font-size:22px;line-height:22px;color:#215a85;font-weight:bold;left:42.00px;transform:scaleX(0.9116);transform-origin:0 0;">Income MyCompany</div><div class="r" style="left:33px;top:287px;width:602px;height:24px;background:#ddebf7;"></div><div class="r" style="left:33px;top:287px;width:603px;height:1px;background:#3c76a3;"></div><div class="r" style="left:33px;top:311px;width:603px;height:1px;background:#3c76a3;"></div><div class="r" style="left:33px;top:410px;width:603px;height:1px;background:#3c76a3;"></div><div class="r" style="left:33px;top:434px;width:603px;height:1px;background:#3c76a3;"></div><div class="r" style="left:257px;top:287px;width:1px;height:148px;background:#3c76a3;"></div><div class="r" style="left:383px;top:287px;width:1px;height:148px;background:#3c76a3;"></div><div class="r" style="left:509px;top:287px;width:1px;height:148px;background:#3c76a3;"></div><div class="r" style="left:635px;top:287px;width:1px;height:148px;background:#3c76a3;"></div><div class="t" style="top:293.66px;font-size:16px;line-height:16px;color:#000;font-weight:bold;right:calc(100% - 375.30px);transform:scaleX(0.9547);transform-origin:100% 0;">Estimated</div><div class="t" style="top:293.66px;font-size:16px;line-height:16px;color:#000;font-weight:bold;right:calc(100% - 501.30px);transform:scaleX(0.9531);transform-origin:100% 0;">Actual</div><div class="t" style="top:293.66px;font-size:16px;line-height:16px;color:#000;font-weight:bold;right:calc(100% - 627.30px);transform:scaleX(0.9751);transform-origin:100% 0;">Difference</div><div class="t" style="top:317.06px;font-size:16px;line-height:16px;color:#000;left:41.00px;">Net sales</div><div class="t" style="top:317.06px;font-size:16px;line-height:16px;color:#000;right:calc(100% - 375.50px);">60.000</div><div class="t" style="top:317.06px;font-size:16px;line-height:16px;color:#000;right:calc(100% - 501.50px);">54.000</div><div class="t" style="top:317.06px;font-size:16px;line-height:16px;color:#000;right:calc(100% - 627.50px);">-6.000</div><div class="t" style="top:341.06px;font-size:16px;line-height:16px;color:#000;left:41.00px;">Interest income</div><div class="t" style="top:341.06px;font-size:16px;line-height:16px;color:#000;right:calc(100% - 375.50px);">3.000</div><div class="t" style="top:341.06px;font-size:16px;line-height:16px;color:#000;right:calc(100% - 501.50px);">3.500</div><div class="t" style="top:341.06px;font-size:16px;line-height:16px;color:#000;right:calc(100% - 627.50px);">500</div><div class="t" style="top:364.96px;font-size:16px;line-height:16px;color:#000;left:41.00px;">Management fees</div><div class="t" style="top:364.96px;font-size:16px;line-height:16px;color:#000;right:calc(100% - 375.50px);">20.000</div><div class="t" style="top:364.96px;font-size:16px;line-height:16px;color:#000;right:calc(100% - 501.50px);">20.000</div><div class="t" style="top:364.96px;font-size:16px;line-height:16px;color:#000;right:calc(100% - 627.50px);"></div><div class="t" style="top:392.36px;font-size:16px;line-height:16px;color:#000;left:41.00px;">Asset sales (gain/loss)</div><div class="t" style="top:392.36px;font-size:16px;line-height:16px;color:#000;right:calc(100% - 375.50px);">300</div><div class="t" style="top:392.36px;font-size:16px;line-height:16px;color:#000;right:calc(100% - 501.50px);">450</div><div class="t" style="top:392.36px;font-size:16px;line-height:16px;color:#000;right:calc(100% - 627.50px);">150</div><div class="t" style="top:415.76px;font-size:16px;line-height:16px;color:#000;font-weight:bold;left:41.00px;">Total income</div><div class="t" style="top:415.76px;font-size:16px;line-height:16px;color:#000;font-weight:bold;right:calc(100% - 375.50px);">83.300</div><div class="t" style="top:415.76px;font-size:16px;line-height:16px;color:#000;font-weight:bold;right:calc(100% - 501.50px);">80.450</div><div class="t" style="top:415.76px;font-size:16px;line-height:16px;color:#000;font-weight:bold;right:calc(100% - 627.50px);">-2.850</div><div class="r" style="left:605px;top:373px;width:4px;height:1.3px;background:#000;"></div><div class="r" style="left:0px;top:383px;width:1400px;height:1px;background:#9c9c9c;"></div><div class="r" style="left:0px;top:401px;width:1400px;height:1px;background:#8f8f8f;"></div><div class="r" style="left:19.5px;top:349px;width:166.5px;height:23.5px;background:#fff;border:1px solid #6e6e6e;border-radius:4px;box-sizing:border-box;box-shadow:3px 4px 10px rgba(0,0,0,0.16);"></div><div class="t" style="top:355.04px;font-size:14.6px;line-height:14.6px;color:#2a7a55;left:24.80px;">Height: 10,80 (18 pixels)</div><div class="r" style="left:0px;top:892px;width:1400px;height:39px;background:#e3e3e3;"></div><div class="r" style="left:0px;top:931px;width:1400px;height:3px;background:#fafafa;"></div><svg class="s" style="left:31px;top:906px;" width="10" height="13" viewBox="0 0 10 13"><polyline points="8,1 2,6.5 8,12" fill="none" stroke="#9a9a9a" stroke-width="1.3"/></svg><svg class="s" style="left:71px;top:906px;" width="10" height="13" viewBox="0 0 10 13"><polyline points="2,1 8,6.5 2,12" fill="none" stroke="#9a9a9a" stroke-width="1.3"/></svg><div class="r" style="left:140.7px;top:898px;width:95.20000000000002px;height:29.5px;background:#2e6b94;border-radius:6px;"></div><div class="t" style="top:906.31px;font-size:17px;line-height:17px;color:#fff;left:152.00px;transform:scaleX(0.9982);transform-origin:0 0;">Summary</div><div class="r" style="left:241.4px;top:901px;width:1px;height:24px;background:#cfcfcf;"></div><div class="r" style="left:247px;top:898px;width:143px;height:29.5px;background:#2e6b94;border-radius:6px;"></div><div class="t" style="top:906.31px;font-size:17px;line-height:17px;color:#fff;left:258.30px;transform:scaleX(1.0408);transform-origin:0 0;">Documentation</div><div class="r" style="left:395.5px;top:901px;width:1px;height:24px;background:#cfcfcf;"></div><div class="r" style="left:401.3px;top:898px;width:78.30000000000001px;height:29.5px;background:#2e6b94;border-radius:6px;"></div><div class="t" style="top:906.31px;font-size:17px;line-height:17px;color:#fff;left:412.60px;transform:scaleX(1.0046);transform-origin:0 0;">Income</div><div class="r" style="left:485.1px;top:901px;width:1px;height:24px;background:#cfcfcf;"></div><div class="r" style="left:491.1px;top:898px;width:91.29999999999995px;height:29.5px;background:#2e6b94;border-radius:6px;"></div><div class="t" style="top:906.31px;font-size:17px;line-height:17px;color:#fff;left:502.40px;transform:scaleX(0.9296);transform-origin:0 0;">Expenses</div><div class="r" style="left:587.9px;top:901px;width:1px;height:24px;background:#cfcfcf;"></div><div class="r" style="left:594px;top:898px;width:97.20000000000005px;height:29.5px;background:#2e6b94;border-radius:6px;"></div><div class="t" style="top:906.31px;font-size:17px;line-height:17px;color:#fff;left:605.30px;transform:scaleX(0.9877);transform-origin:0 0;">Personnel</div><div class="r" style="left:696.7px;top:901px;width:1px;height:24px;background:#cfcfcf;"></div><div class="r" style="left:703px;top:898px;width:99.60000000000002px;height:29.5px;background:#2e6b94;border-radius:6px;"></div><div class="t" style="top:906.31px;font-size:17px;line-height:17px;color:#fff;left:714.30px;transform:scaleX(1.0274);transform-origin:0 0;">Operating</div><svg class="s" style="left:861px;top:905px;" width="16" height="16" viewBox="0 0 16 16"><path d="M8,1 V15 M1,8 H15" stroke="#333" stroke-width="1.5"/></svg><div class="r" style="left:0px;top:0px;width:2px;height:932px;background:#4b6870;"></div></div><div class="win" style="left:371px;top:480px;width:979px;height:940px;box-shadow:0 0 50px rgba(0,0,0,0.42);overflow:visible;"><div style="position:absolute;left:0;top:0;width:979px;height:940px;overflow:hidden;"><div style="position:absolute;left:0;top:5px;width:1400px;height:935px;"><div class="r" style="left:0px;top:-10px;width:1400px;height:945px;background:#e1eae0;"></div><div class="t" style="top:12.96px;font-size:16px;line-height:16px;color:#262626;left:27.30px;">File</div><div class="t" style="top:12.96px;font-size:16px;line-height:16px;color:#262626;font-weight:bold;left:84.30px;">Home</div><div class="t" style="top:12.96px;font-size:16px;line-height:16px;color:#262626;left:154.00px;">Insert</div><div class="t" style="top:12.96px;font-size:16px;line-height:16px;color:#262626;left:221.70px;">Page Layout</div><div class="t" style="top:12.96px;font-size:16px;line-height:16px;color:#262626;left:338.30px;">Formulas</div><div class="t" style="top:12.96px;font-size:16px;line-height:16px;color:#262626;left:431.70px;">Data</div><div class="t" style="top:12.96px;font-size:16px;line-height:16px;color:#262626;left:491.00px;">Review</div><div class="t" style="top:12.96px;font-size:16px;line-height:16px;color:#262626;left:568.30px;">View</div><div class="t" style="top:12.96px;font-size:16px;line-height:16px;color:#262626;left:628.30px;">Help</div><div class="r" style="left:84px;top:32px;width:48px;height:3px;background:#1e7145;border-radius:2px;"></div><div class="r" style="left:10px;top:38px;width:1400px;height:124px;background:#fff;border-radius:8px;box-shadow:0 1px 3px rgba(0,0,0,0.2);"></div><div class="t" style="top:143.80px;font-size:13px;line-height:13px;color:#262626;left:37.50px;transform:scaleX(1.0244);transform-origin:0 0;">Clipboard</div><div class="t" style="top:143.80px;font-size:13px;line-height:13px;color:#262626;left:262.70px;transform:scaleX(0.9227);transform-origin:0 0;">Font</div><div class="t" style="top:143.80px;font-size:13px;line-height:13px;color:#262626;left:573.00px;transform:scaleX(0.9999);transform-origin:0 0;">Alignment</div><div class="t" style="top:143.80px;font-size:13px;line-height:13px;color:#262626;left:859.20px;transform:scaleX(1.0252);transform-origin:0 0;">Number</div><div class="t" style="top:143.80px;font-size:13px;line-height:13px;color:#262626;left:1098.00px;transform:scaleX(0.9181);transform-origin:0 0;">Styles</div><div class="t" style="top:143.80px;font-size:13px;line-height:13px;color:#262626;left:1313.40px;transform:scaleX(0.9102);transform-origin:0 0;">Cells</div><div class="r" style="left:138.6px;top:44px;width:1px;height:111px;background:#d4d4d4;"></div><div class="r" style="left:430px;top:44px;width:1px;height:111px;background:#d4d4d4;"></div><div class="r" style="left:793px;top:44px;width:1px;height:111px;background:#d4d4d4;"></div><div class="r" style="left:1236.4px;top:44px;width:1px;height:111px;background:#d4d4d4;"></div><svg class="s" style="left:124px;top:145px;" width="11" height="11" viewBox="0 0 11 11"><path d="M0.5,7 V0.5 H7" fill="none" stroke="#555" stroke-width="1.1"/><path d="M3,3 L9.5,9.5 M9.5,5 V9.5 H5" fill="none" stroke="#555" stroke-width="1.1"/></svg><svg class="s" style="left:416px;top:145px;" width="11" height="11" viewBox="0 0 11 11"><path d="M0.5,7 V0.5 H7" fill="none" stroke="#555" stroke-width="1.1"/><path d="M3,3 L9.5,9.5 M9.5,5 V9.5 H5" fill="none" stroke="#555" stroke-width="1.1"/></svg><svg class="s" style="left:779px;top:145px;" width="11" height="11" viewBox="0 0 11 11"><path d="M0.5,7 V0.5 H7" fill="none" stroke="#555" stroke-width="1.1"/><path d="M3,3 L9.5,9.5 M9.5,5 V9.5 H5" fill="none" stroke="#555" stroke-width="1.1"/></svg><svg class="s" style="left:979px;top:145px;" width="11" height="11" viewBox="0 0 11 11"><path d="M0.5,7 V0.5 H7" fill="none" stroke="#555" stroke-width="1.1"/><path d="M3,3 L9.5,9.5 M9.5,5 V9.5 H5" fill="none" stroke="#555" stroke-width="1.1"/></svg><svg class="s" style="left:35px;top:46px;" width="38" height="42" viewBox="0 0 38 42"><rect x="3" y="8" width="24.5" height="28.5" fill="#f8f8fa" stroke="#e8912d" stroke-width="2"/><rect x="5" y="10" width="20.5" height="24.5" fill="none" stroke="#fde3a4" stroke-width="1.5"/><path d="M8,12.3 V7 H11.5 A4,4 0 0 1 19.5,7 H23.5 V12.3 Z" fill="#f4f4f4" stroke="#6e6e6e" stroke-width="1.6"/><rect x="19.2" y="18" width="16.6" height="21.5" fill="#f8f8f8" stroke="#555" stroke-width="1.8"/></svg><div class="t" style="top:93.23px;font-size:14.5px;line-height:14.5px;color:#262626;left:35.10px;transform:scaleX(0.8739);transform-origin:0 0;">Paste</div><svg class="s" style="left:46.0px;top:116.5px;" width="9" height="6" viewBox="0 0 9 6"><polyline points="1,1 4.5,5 8,1" fill="none" stroke="#333" stroke-width="1.3"/></svg><svg class="s" style="left:85px;top:45px;" width="16" height="24" viewBox="0 0 16 24"><path d="M5.3,2 L12.3,17.5 M12.8,2 L5.8,17.5" stroke="#404040" stroke-width="1.1" fill="none"/><circle cx="5" cy="19.4" r="2.3" fill="#fff" stroke="#2b88d8" stroke-width="1.6"/><circle cx="12.8" cy="19.4" r="2.3" fill="#fff" stroke="#2b88d8" stroke-width="1.6"/></svg><svg class="s" style="left:82px;top:77px;" width="24" height="24" viewBox="0 0 24 24"><path d="M10.5,19.5 H2.8 V2.5 H10 L12,4.5" fill="#f7f7f7" stroke="#555" stroke-width="1.6"/><path d="M10,6.5 H16.2 L21.5,11.8 V21.4 H10 Z" fill="#f7f7f7" stroke="#555" stroke-width="1.6"/><path d="M16,6.5 V11.5 H21.5" fill="none" stroke="#555" stroke-width="1.3"/><path d="M13.2,14.8 H18.3 M13.2,17.5 H18.3" stroke="#777" stroke-width="1.2"/></svg><svg class="s" style="left:112.8px;top:87.0px;" width="9" height="6" viewBox="0 0 9 6"><polyline points="1,1 4.5,5 8,1" fill="none" stroke="#333" stroke-width="1.3"/></svg><svg class="s" style="left:80px;top:106px;" width="26" height="26" viewBox="0 0 26 26"><path d="M4.4,13.3 L12.4,9.6 L19.3,16.9 L12.4,22.9 Z" fill="#fff" stroke="#e4572e" stroke-width="1.3" stroke-linejoin="round"/><path d="M6.3,15.2 L18.2,18 L12.4,22.3 Z" fill="#fde3a4" stroke="#e0502a" stroke-width="1.2" stroke-linejoin="round"/><path d="M12.4,9.6 L14.4,7.3 L16.9,9.6 L21.6,5.1 L23.8,7.1 L19.3,11.6 L21.3,14.2 L19.3,16.9 Z" fill="#fff" stroke="#333" stroke-width="1.4" stroke-linejoin="round"/></svg><div class="r" style="left:149px;top:52px;width:144px;height:30px;background:#fff;border:1px solid #8c8c8c;border-radius:5px;box-sizing:border-box;"></div><div class="t" style="top:60.38px;font-size:15.5px;line-height:15.5px;color:#1a1a1a;left:152.20px;transform:scaleX(0.9607);transform-origin:0 0;">Calibri</div><svg class="s" style="left:281.0px;top:64.5px;" width="9" height="6" viewBox="0 0 9 6"><polyline points="1,1 4.5,5 8,1" fill="none" stroke="#333" stroke-width="1.2"/></svg><div class="r" style="left:295px;top:52px;width:62px;height:30px;background:#fff;border:1px solid #8c8c8c;border-radius:5px;box-sizing:border-box;"></div><div class="t" style="top:60.38px;font-size:15.5px;line-height:15.5px;color:#1a1a1a;left:298.40px;transform:scaleX(0.9013);transform-origin:0 0;">11</div><svg class="s" style="left:344.4px;top:64.5px;" width="9" height="6" viewBox="0 0 9 6"><polyline points="1,1 4.5,5 8,1" fill="none" stroke="#333" stroke-width="1.2"/></svg><svg class="s" style="left:363px;top:55px;" width="24" height="20" viewBox="0 0 24 20"><path d="M2.6,17.8 L9.1,2.3 L15.3,17.8 M5,12.4 H13.2" fill="none" stroke="#333" stroke-width="1.3"/><path d="M15.1,6.7 L17.7,3.3 L20.8,6.7" fill="none" stroke="#2b88d8" stroke-width="1.6"/></svg><svg class="s" style="left:397px;top:55px;" width="22" height="20" viewBox="0 0 22 20"><path d="M2.6,17.8 L7.8,5.6 L12.7,17.8 M4.6,13.4 H10.8" fill="none" stroke="#333" stroke-width="1.3"/><path d="M13,3.6 L15.5,6.7 L18.7,3.6" fill="none" stroke="#2b88d8" stroke-width="1.6"/></svg><div class="t" style="top:96.94px;font-size:18.5px;line-height:18.5px;color:#3a3a3a;font-weight:bold;left:159.80px;transform:scaleX(0.6736);transform-origin:0 0;-webkit-text-stroke:0.5px #3a3a3a;">B</div><svg class="s" style="left:188px;top:96px;" width="14" height="18" viewBox="0 0 14 18"><path d="M6.5,3.5 H11.8 M3.8,15.3 H9 M9.2,3.5 L6.3,15.3" fill="none" stroke="#3a3a3a" stroke-width="1.4"/></svg><svg class="s" style="left:220px;top:97px;" width="15" height="19" viewBox="0 0 15 19"><path d="M3,2 V9.5 A4.5,4.5 0 0 0 12,9.5 V2" fill="none" stroke="#3a3a3a" stroke-width="1.5"/><rect x="1.8" y="16.3" width="11.3" height="1.5" fill="#555"/></svg><svg class="s" style="left:246.9px;top:103.8px;" width="9" height="6" viewBox="0 0 9 6"><polyline points="1,1 4.5,5 8,1" fill="none" stroke="#333" stroke-width="1.2"/></svg><div class="r" style="left:264.5px;top:92px;width:1px;height:30px;background:#d4d4d4;"></div><svg class="s" style="left:271px;top:96px;" width="22" height="21" viewBox="0 0 22 21"><path d="M1.6,1.5 H19.8 V18.5 M1.6,1.5 V18.5 M10.7,1.5 V18.5 M1.6,10 H19.8" fill="none" stroke="#555" stroke-width="1.1" stroke-dasharray="1.2,1.2"/><rect x="1" y="18.2" width="19.4" height="2" fill="#555"/></svg><svg class="s" style="left:300.9px;top:103.8px;" width="9" height="6" viewBox="0 0 9 6"><polyline points="1,1 4.5,5 8,1" fill="none" stroke="#333" stroke-width="1.2"/></svg><div class="r" style="left:318.6px;top:92px;width:1px;height:30px;background:#d4d4d4;"></div><svg class="s" style="left:325px;top:95px;" width="23" height="23" viewBox="0 0 23 23"><path d="M4.5,8.5 L11,2.5 L17,9 L10.5,15.5 Z" fill="#fff" stroke="#3a3a3a" stroke-width="1.4" stroke-linejoin="round"/><path d="M9.5,4.5 C8,1.5 11.5,0.5 12.5,3.5" fill="none" stroke="#3a3a3a" stroke-width="1.3"/><path d="M16,4 C18,5 18.8,7 18.6,10.5" fill="none" stroke="#1a6fc4" stroke-width="2.6" stroke-linecap="round"/><rect x="1.5" y="17.3" width="19.4" height="4.3" fill="#fff" stroke="#8a8a8a" stroke-width="1"/></svg><svg class="s" style="left:354.9px;top:103.8px;" width="9" height="6" viewBox="0 0 9 6"><polyline points="1,1 4.5,5 8,1" fill="none" stroke="#333" stroke-width="1.2"/></svg><svg class="s" style="left:376px;top:95px;" width="22" height="23" viewBox="0 0 22 23"><path d="M5.7,15.3 L11,2.3 L16.5,15.3 M7.6,10.8 H14.6" fill="none" stroke="#3a3a3a" stroke-width="1.3"/><rect x="1" y="17" width="20" height="4.8" fill="#000"/></svg><svg class="s" style="left:405.8px;top:103.8px;" width="9" height="6" viewBox="0 0 9 6"><polyline points="1,1 4.5,5 8,1" fill="none" stroke="#333" stroke-width="1.2"/></svg><div class="r" style="left:505.3px;top:52.5px;width:29.3px;height:29px;background:#ebebeb;border:1px solid #5a5a5a;border-radius:5px;box-sizing:border-box;"></div><svg class="s" style="left:0px;top:0px;pointer-events:none;" width="800" height="130" viewBox="0 0 800 130"><rect x="447.20" y="56.45" width="17.80" height="1.5" fill="#4a4a4a"/><rect x="450.40" y="61.75" width="11.30" height="1.5" fill="#4a4a4a"/><rect x="447.20" y="66.85" width="17.80" height="1.5" fill="#4a4a4a"/><rect x="479.20" y="60.55" width="17.80" height="1.5" fill="#4a4a4a"/><rect x="482.40" y="65.65" width="11.50" height="1.5" fill="#4a4a4a"/><rect x="479.20" y="70.55" width="17.80" height="1.5" fill="#4a4a4a"/><rect x="511.30" y="65.65" width="17.60" height="1.5" fill="#4a4a4a"/><rect x="514.00" y="70.55" width="11.90" height="1.5" fill="#4a4a4a"/><rect x="511.30" y="75.45" width="17.60" height="1.5" fill="#4a4a4a"/><rect x="447.20" y="98.25" width="17.80" height="1.5" fill="#4a4a4a"/><rect x="447.20" y="102.95" width="12.60" height="1.5" fill="#4a4a4a"/><rect x="447.20" y="108.05" width="17.80" height="1.5" fill="#4a4a4a"/><rect x="447.20" y="113.05" width="12.60" height="1.5" fill="#4a4a4a"/><rect x="479.20" y="98.25" width="17.80" height="1.5" fill="#4a4a4a"/><rect x="482.40" y="102.95" width="11.50" height="1.5" fill="#4a4a4a"/><rect x="479.20" y="108.05" width="17.80" height="1.5" fill="#4a4a4a"/><rect x="482.40" y="113.05" width="11.50" height="1.5" fill="#4a4a4a"/><rect x="510.90" y="98.25" width="17.70" height="1.5" fill="#4a4a4a"/><rect x="516.20" y="102.95" width="12.40" height="1.5" fill="#4a4a4a"/><rect x="510.90" y="108.05" width="17.70" height="1.5" fill="#4a4a4a"/><rect x="516.20" y="113.05" width="12.40" height="1.5" fill="#4a4a4a"/><rect x="546.00" y="98.25" width="17.60" height="1.5" fill="#4a4a4a"/><rect x="556.50" y="102.95" width="7.10" height="1.5" fill="#4a4a4a"/><rect x="556.50" y="108.05" width="7.10" height="1.5" fill="#4a4a4a"/><rect x="546.00" y="113.05" width="17.60" height="1.5" fill="#4a4a4a"/><rect x="577.80" y="98.25" width="18.00" height="1.5" fill="#4a4a4a"/><rect x="588.20" y="102.95" width="7.60" height="1.5" fill="#4a4a4a"/><rect x="588.20" y="108.05" width="7.60" height="1.5" fill="#4a4a4a"/><rect x="577.80" y="113.05" width="18.00" height="1.5" fill="#4a4a4a"/><path d="M553.5,106.2 H547 M550,103.2 L547,106.2 L550,109.2" fill="none" stroke="#2b88d8" stroke-width="1.6"/><path d="M578.5,106.2 H585.5 M582.5,103.2 L585.5,106.2 L582.5,109.2" fill="none" stroke="#2b88d8" stroke-width="1.6"/><path d="M552,75.3 L564.5,62.5 M558.5,62.5 H564.5 V68.5" fill="none" stroke="#2b88d8" stroke-width="1.6"/><text x="0" y="0" transform="translate(547.5,71.5) rotate(-45)" font-family="Liberation Sans" font-size="12.5" fill="#444">ab</text></svg><div class="r" style="left:537.5px;top:52px;width:1px;height:30px;background:#d4d4d4;"></div><div class="r" style="left:537.5px;top:92px;width:1px;height:30px;background:#d4d4d4;"></div><svg class="s" style="left:571.8px;top:63.5px;" width="9" height="6" viewBox="0 0 9 6"><polyline points="1,1 4.5,5 8,1" fill="none" stroke="#333" stroke-width="1.2"/></svg><div class="r" style="left:609.5px;top:51px;width:1px;height:77px;background:#d4d4d4;"></div><svg class="s" style="left:620px;top:52px;" width="26" height="28" viewBox="0 0 26 28"><text x="4.5" y="14.6" font-family="Liberation Sans" font-size="12" fill="#444">ab</text><text x="4.8" y="23.9" font-family="Liberation Sans" font-size="12" fill="#444">c</text><path d="M21.6,15 C23.5,19 20,21 13.5,20.5 M16,17.8 L13,20.4 L16,23.4" fill="none" stroke="#2b88d8" stroke-width="1.6"/></svg><div class="t" style="top:59.33px;font-size:16.5px;line-height:16.5px;color:#262626;left:647.20px;transform:scaleX(0.9041);transform-origin:0 0;">Wrap Text</div><svg class="s" style="left:620px;top:95px;" width="23" height="23" viewBox="0 0 23 23"><rect x="2.2" y="2.3" width="18.5" height="18.2" fill="#fff" stroke="#505050" stroke-width="1.6"/><path d="M11.3,2.3 V5.2 M11.3,16.7 V20.5" stroke="#505050" stroke-width="1.5"/><rect x="2.2" y="5.2" width="18.5" height="11.5" fill="#fff" stroke="#2b88d8" stroke-width="1.6"/><path d="M5.5,11.2 H17.5 M8.3,8.6 L5.5,11.2 L8.3,13.8 M14.7,8.6 L17.5,11.2 L14.7,13.8" fill="none" stroke="#2b88d8" stroke-width="1.6"/></svg><div class="t" style="top:99.33px;font-size:16.5px;line-height:16.5px;color:#262626;left:647.80px;transform:scaleX(0.9016);transform-origin:0 0;">Merge &amp; Centre</div><svg class="s" style="left:768.0px;top:104.3px;" width="9" height="6" viewBox="0 0 9 6"><polyline points="1,1 4.5,5 8,1" fill="none" stroke="#333" stroke-width="1.2"/></svg><div class="r" style="left:804.3px;top:52px;width:179.70000000000005px;height:30px;background:#fff;border:1px solid #8c8c8c;border-radius:5px;box-sizing:border-box;"></div><div class="t" style="top:60.38px;font-size:15.5px;line-height:15.5px;color:#1a1a1a;left:807.40px;transform:scaleX(0.9159);transform-origin:0 0;">General</div><svg class="s" style="left:971.3px;top:64.5px;" width="9" height="6" viewBox="0 0 9 6"><polyline points="1,1 4.5,5 8,1" fill="none" stroke="#333" stroke-width="1.2"/></svg><svg class="s" style="left:807px;top:98px;" width="24" height="21" viewBox="0 0 24 21"><rect x="2" y="2.7" width="20" height="12.6" fill="#fff" stroke="#505050" stroke-width="1.5"/><path d="M8,6.2 H5 V11.8 H8 M13,6.2 H10 V11.8 H13" fill="none" stroke="#606060" stroke-width="1.3"/><path d="M12.4,10 V16.5 A4.6,2 0 0 0 21.6,16.5 V10" fill="#fff" stroke="#e0502a" stroke-width="1.3"/><ellipse cx="17" cy="10" rx="4.6" ry="2" fill="#fde3a4" stroke="#e0502a" stroke-width="1.3"/><path d="M12.4,13.2 A4.6,2 0 0 0 21.6,13.2" fill="none" stroke="#e0502a" stroke-width="1.2"/></svg><svg class="s" style="left:837.9px;top:103.8px;" width="9" height="6" viewBox="0 0 9 6"><polyline points="1,1 4.5,5 8,1" fill="none" stroke="#333" stroke-width="1.2"/></svg><div class="t" style="top:96.88px;font-size:22px;line-height:22px;color:#404040;left:860.30px;transform:scaleX(0.9457);transform-origin:0 0;-webkit-text-stroke:0;">%</div><svg class="s" style="left:895px;top:98px;" width="14" height="19" viewBox="0 0 14 19"><path d="M7.2,2.2 C10.8,2.2 12.2,5 11.6,8.5 C11,12 8,15 3,16.5 C5.8,14 7,12.3 7,10.5 C4.2,10.5 3,8.5 3,6.3 C3,3.8 4.8,2.2 7.2,2.2 Z" fill="#3a3a3a"/></svg><div class="r" style="left:919.4px;top:92px;width:1px;height:30px;background:#d4d4d4;"></div><svg class="s" style="left:920px;top:92px;" width="65" height="28" viewBox="0 0 65 28"><text x="19.4" y="13.8" font-family="Liberation Sans" font-size="12.5" fill="#404040">0</text><text x="13.3" y="23.9" font-family="Liberation Sans" font-size="12.5" fill="#404040">00</text><text x="45.6" y="13.8" font-family="Liberation Sans" font-size="12.5" fill="#404040">00</text><text x="51.8" y="23.9" font-family="Liberation Sans" font-size="12.5" fill="#404040">0</text><circle cx="17.6" cy="13" r="0.9" fill="#404040"/><circle cx="11.2" cy="23.1" r="0.9" fill="#404040"/><circle cx="43.4" cy="13" r="0.9" fill="#404040"/><circle cx="49.6" cy="23.1" r="0.9" fill="#404040"/><path d="M18.5,10.4 H7.8 M11.6,6.4 L7.6,10.4 L11.6,14.4" fill="none" stroke="#2b88d8" stroke-width="1.6"/><path d="M39,19.3 H49.3 M45.5,15.3 L49.5,19.3 L45.5,23.3" fill="none" stroke="#2b88d8" stroke-width="1.6"/></svg><div class="r" style="left:993px;top:44px;width:1px;height:111px;background:#d4d4d4;"></div><svg class="s" style="left:0px;top:0px;pointer-events:none;" width="1350" height="100" viewBox="0 0 1350 100"><rect x="1032.4" y="52.2" width="35.3" height="27.6" fill="#fafafa"/><g stroke="#666" stroke-width="1.5" fill="none"><path d="M1032.4,52.2 V79.8"/><path d="M1039,52.2 V79.8"/><path d="M1049.4,52.2 V79.8"/><path d="M1060.6,52.2 V79.8"/><path d="M1067.7,52.2 V79.8"/><path d="M1032.4,52.2 H1067.7"/><path d="M1032.4,61.6 H1067.7"/><path d="M1032.4,70.4 H1067.7"/><path d="M1032.4,79.8 H1067.7"/></g><rect x="1039" y="52.2" width="15.6" height="9.4" fill="#f4a3aa" stroke="#e0482a" stroke-width="1.4"/><rect x="1039" y="61.6" width="10.4" height="8.8" fill="#8ec0ea" stroke="#1e73be" stroke-width="1.4"/><rect x="1039" y="70.4" width="18" height="9.4" fill="#f4a3aa" stroke="#e0482a" stroke-width="1.4"/><rect x="1115.4" y="52.2" width="35.2" height="27.6" fill="#fafafa"/><rect x="1127.2" y="61.1" width="23.4" height="18.7" fill="#8ec0ea"/><g stroke="#666" stroke-width="1.5" fill="none"><path d="M1115.4,52.2 V79.8"/><path d="M1127.2,52.2 V79.8"/><path d="M1139,52.2 V79.8"/><path d="M1150.6,52.2 V79.8"/><path d="M1115.4,52.2 H1150.6"/><path d="M1115.4,61.1 H1150.6"/><path d="M1115.4,70.4 H1150.6"/><path d="M1115.4,79.8 H1150.6"/></g><path d="M1127.2,79.8 V61.1 H1150.6" fill="none" stroke="#1e73be" stroke-width="1.5"/><path d="M1152.5,60.5 C1154.5,59.5 1155.5,61 1154.3,63 L1139.5,78.5 L1136,75.5 Z" fill="#fff" stroke="#404040" stroke-width="1.3"/><path d="M1135.5,75.5 L1139.5,79 C1139,84 1133,86.5 1125,85.2 C1129,84 1129.5,82.5 1130,80 C1130.5,77 1133,75.5 1135.5,75.5 Z" fill="#6fb0e6" stroke="#1e73be" stroke-width="1.2"/><rect x="1180.6" y="52.2" width="34.8" height="27.6" fill="#fafafa"/><rect x="1187.2" y="58.6" width="22.2" height="14.8" fill="#8ec0ea" stroke="#1e73be" stroke-width="1.5"/><g stroke="#666" stroke-width="1.5" fill="none"><rect x="1180.6" y="52.2" width="34.8" height="27.6"/><path d="M1187.2,52.2 V58.6 M1209.4,52.2 V58.6 M1180.6,58.6 H1187.2 M1209.4,58.6 H1215.4 M1180.6,73.4 H1187.2 M1187.2,73.4 V79.8"/></g><path d="M1217.5,60.5 C1219.5,59.5 1220.5,61 1219.3,63 L1204.5,78.5 L1201,75.5 Z" fill="#fff" stroke="#404040" stroke-width="1.3"/><path d="M1200.5,75.5 L1204.5,79 C1204,84 1198,86.5 1190,85.2 C1194,84 1194.5,82.5 1195,80 C1195.5,77 1198,75.5 1200.5,75.5 Z" fill="#6fb0e6" stroke="#1e73be" stroke-width="1.2"/><rect x="1255.5" y="52.6" width="34.6" height="26.8" fill="#fafafa"/><g stroke="#555" stroke-width="1.6" fill="none"><path d="M1255.5,61.2 V52.6 H1290.1 V79.4 H1255.5 V70.5 M1267.6,52.6 V79.4 M1278.8,52.6 V79.4"/></g><path d="M1260.6,61.2 H1292.4 V70.5 H1260.6" fill="#86bde9" stroke="#1f73c0" stroke-width="1.6"/><path d="M1254,65.6 H1269 M1261.7,57.6 L1254,65.6 L1261.7,73.4" fill="none" stroke="#2b88d8" stroke-width="1.6"/><rect x="1309.5" y="52.6" width="35" height="26.8" fill="#fafafa"/><g stroke="#555" stroke-width="1.6" fill="none"><path d="M1309.5,61.2 V52.6 H1344.5 V59 M1344.5,74 V79.4 H1309.5 V70.5 M1321.6,52.6 V79.4 M1332.5,52.6 V60 M1332.5,72 V79.4"/></g><path d="M1314.6,61.2 H1330.5 L1335.5,65.8 L1330.5,70.5 H1314.6 Z" fill="#86bde9" stroke="#1f73c0" stroke-width="1.6"/><path d="M1332,59.5 L1346,73.5 M1346,59.5 L1332,73.5" stroke="#e4572e" stroke-width="1.5"/></svg><div class="t" style="top:91.05px;font-size:15.3px;line-height:15.3px;color:#262626;left:1011.30px;transform:scaleX(0.9889);transform-origin:0 0;">Conditional</div><div class="t" style="top:111.25px;font-size:15.3px;line-height:15.3px;color:#262626;left:1006.00px;transform:scaleX(0.9847);transform-origin:0 0;">Formatting</div><svg class="s" style="left:1083.0px;top:116.3px;" width="9" height="6" viewBox="0 0 9 6"><polyline points="1,1 4.5,5 8,1" fill="none" stroke="#333" stroke-width="1.2"/></svg><div class="t" style="top:91.05px;font-size:15.3px;line-height:15.3px;color:#262626;left:1100.30px;transform:scaleX(0.9352);transform-origin:0 0;">Format as</div><div class="t" style="top:111.25px;font-size:15.3px;line-height:15.3px;color:#262626;left:1108.70px;transform:scaleX(0.9296);transform-origin:0 0;">Table</div><svg class="s" style="left:1146.5px;top:116.3px;" width="9" height="6" viewBox="0 0 9 6"><polyline points="1,1 4.5,5 8,1" fill="none" stroke="#333" stroke-width="1.2"/></svg><div class="t" style="top:91.05px;font-size:15.3px;line-height:15.3px;color:#262626;left:1186.60px;transform:scaleX(0.8992);transform-origin:0 0;">Cell</div><div class="t" style="top:111.25px;font-size:15.3px;line-height:15.3px;color:#262626;left:1172.60px;transform:scaleX(0.8881);transform-origin:0 0;">Styles</div><svg class="s" style="left:1213.9px;top:116.3px;" width="9" height="6" viewBox="0 0 9 6"><polyline points="1,1 4.5,5 8,1" fill="none" stroke="#333" stroke-width="1.2"/></svg><div class="t" style="top:92.85px;font-size:15.3px;line-height:15.3px;color:#262626;left:1255.50px;transform:scaleX(0.9278);transform-origin:0 0;">Insert</div><svg class="s" style="left:1268.1px;top:116.3px;" width="9" height="6" viewBox="0 0 9 6"><polyline points="1,1 4.5,5 8,1" fill="none" stroke="#333" stroke-width="1.2"/></svg><div class="t" style="top:92.85px;font-size:15.3px;line-height:15.3px;color:#262626;left:1305.50px;transform:scaleX(0.9271);transform-origin:0 0;">Delete</div><svg class="s" style="left:1322.0px;top:116.3px;" width="9" height="6" viewBox="0 0 9 6"><polyline points="1,1 4.5,5 8,1" fill="none" stroke="#333" stroke-width="1.2"/></svg><div class="r" style="left:10px;top:172px;width:126px;height:29px;background:#fff;border-radius:5px;box-shadow:0 0 0 1px #d9dcd8;"></div><div class="t" style="top:180.46px;font-size:16px;line-height:16px;color:#111;left:16.50px;">A3</div><svg class="s" style="left:117.0px;top:185.0px;" width="14" height="8" viewBox="0 0 14 8"><polyline points="1,1 7.0,7 13,1" fill="none" stroke="#333" stroke-width="1.3"/></svg><div class="r" style="left:148px;top:181px;width:3px;height:3px;background:#444;"></div><div class="r" style="left:148px;top:186px;width:3px;height:3px;background:#444;"></div><div class="r" style="left:148px;top:191px;width:3px;height:3px;background:#444;"></div><div class="r" style="left:163px;top:173px;width:90px;height:28px;background:#fff;border-radius:5px;box-shadow:0 0 0 1px #d9dcd8;"></div><svg class="s" style="left:170px;top:179px;" width="16" height="16" viewBox="0 0 16 16"><path d="M1,1 L15,15 M15,1 L1,15" stroke="#b4b4b4" stroke-width="1.3"/></svg><svg class="s" style="left:197px;top:179px;" width="22" height="16" viewBox="0 0 22 16"><path d="M1,8 L7,14 L21,1" fill="none" stroke="#b4b4b4" stroke-width="1.3"/></svg><div class="t" style="top:175.72px;font-size:21px;line-height:21px;color:#333;left:229.00px;transform:scaleX(1.2000);transform-origin:0 0;font-family:'Liberation Serif';font-style:italic;">fx</div><div class="r" style="left:260px;top:173px;width:1400px;height:28px;background:#fff;border-radius:5px;box-shadow:0 0 0 1px #d9dcd8;"></div><div class="r" style="left:0px;top:210px;width:1400px;height:23px;background:#e1e1e1;"></div><div class="r" style="left:0px;top:210px;width:33px;height:24px;background:#efefef;"></div><svg class="s" style="left:14px;top:214px;" width="17" height="16" viewBox="0 0 17 16"><polygon points="16,0 16,16 0,16" fill="#dcdcdc"/></svg><div class="r" style="left:33px;top:233px;width:1400px;height:659px;background:#fff;"></div><div class="r" style="left:0px;top:233px;width:33px;height:659px;background:#efefef;"></div><div class="r" style="left:33px;top:210px;width:1px;height:682px;background:#b5b5b5;"></div><div class="r" style="left:4px;top:233px;width:29px;height:1px;background:#d8d8d8;"></div><div class="r" style="left:33px;top:233px;width:1400px;height:1px;background:#a8a8a8;"></div><div class="r" style="left:135px;top:210px;width:1px;height:22px;background:#c4c4c4;"></div><div class="t" style="top:215.26px;font-size:16px;line-height:16px;color:#1d6b45;left:-216.00px;width:600px;text-align:center;">A</div><div class="r" style="left:244px;top:210px;width:1px;height:22px;background:#c4c4c4;"></div><div class="t" style="top:215.26px;font-size:16px;line-height:16px;color:#1d6b45;left:-110.50px;width:600px;text-align:center;">B</div><div class="r" style="left:324px;top:210px;width:1px;height:22px;background:#c4c4c4;"></div><div class="t" style="top:215.26px;font-size:16px;line-height:16px;color:#1d6b45;left:-16.00px;width:600px;text-align:center;">C</div><div class="r" style="left:564px;top:210px;width:1px;height:22px;background:#c4c4c4;"></div><div class="t" style="top:215.26px;font-size:16px;line-height:16px;color:#1d6b45;left:144.00px;width:600px;text-align:center;">D</div><div class="r" style="left:965px;top:210px;width:1px;height:22px;background:#c4c4c4;"></div><div class="t" style="top:215.26px;font-size:16px;line-height:16px;color:#1d6b45;left:464.50px;width:600px;text-align:center;">E</div><div class="r" style="left:1400px;top:210px;width:1px;height:22px;background:#c4c4c4;"></div><div class="t" style="top:215.26px;font-size:16px;line-height:16px;color:#1d6b45;left:882.50px;width:600px;text-align:center;">F</div><div class="r" style="left:4px;top:257px;width:29px;height:1px;background:#d8d8d8;"></div><div class="t" style="top:239.46px;font-size:16px;line-height:16px;color:#333;left:-283.50px;width:600px;text-align:center;">1</div><div class="r" style="left:4px;top:281px;width:29px;height:1px;background:#d8d8d8;"></div><div class="t" style="top:263.46px;font-size:16px;line-height:16px;color:#333;left:-283.50px;width:600px;text-align:center;">2</div><div class="r" style="left:0px;top:281px;width:33px;height:24px;background:#d3ebd9;"></div><div class="r" style="left:4px;top:305px;width:29px;height:1px;background:#d8d8d8;"></div><div class="t" style="top:287.46px;font-size:16px;line-height:16px;color:#1d6b45;left:-283.50px;width:600px;text-align:center;">3</div><div class="r" style="left:4px;top:329px;width:29px;height:1px;background:#d8d8d8;"></div><div class="t" style="top:311.46px;font-size:16px;line-height:16px;color:#333;left:-283.50px;width:600px;text-align:center;">4</div><div class="r" style="left:4px;top:353px;width:29px;height:1px;background:#d8d8d8;"></div><div class="t" style="top:335.46px;font-size:16px;line-height:16px;color:#333;left:-283.50px;width:600px;text-align:center;">5</div><div class="r" style="left:4px;top:377px;width:29px;height:1px;background:#d8d8d8;"></div><div class="t" style="top:359.46px;font-size:16px;line-height:16px;color:#333;left:-283.50px;width:600px;text-align:center;">6</div><div class="r" style="left:4px;top:401px;width:29px;height:1px;background:#d8d8d8;"></div><div class="t" style="top:383.46px;font-size:16px;line-height:16px;color:#333;left:-283.50px;width:600px;text-align:center;">7</div><div class="r" style="left:4px;top:425px;width:29px;height:1px;background:#d8d8d8;"></div><div class="t" style="top:407.46px;font-size:16px;line-height:16px;color:#333;left:-283.50px;width:600px;text-align:center;">8</div><div class="r" style="left:4px;top:449px;width:29px;height:1px;background:#d8d8d8;"></div><div class="t" style="top:431.46px;font-size:16px;line-height:16px;color:#333;left:-283.50px;width:600px;text-align:center;">9</div><div class="r" style="left:4px;top:473px;width:29px;height:1px;background:#d8d8d8;"></div><div class="t" style="top:455.46px;font-size:16px;line-height:16px;color:#333;left:-283.50px;width:600px;text-align:center;">10</div><div class="r" style="left:4px;top:497px;width:29px;height:1px;background:#d8d8d8;"></div><div class="t" style="top:479.46px;font-size:16px;line-height:16px;color:#333;left:-283.50px;width:600px;text-align:center;">11</div><div class="r" style="left:4px;top:521px;width:29px;height:1px;background:#d8d8d8;"></div><div class="t" style="top:503.46px;font-size:16px;line-height:16px;color:#333;left:-283.50px;width:600px;text-align:center;">12</div><div class="r" style="left:4px;top:545px;width:29px;height:1px;background:#d8d8d8;"></div><div class="t" style="top:527.46px;font-size:16px;line-height:16px;color:#333;left:-283.50px;width:600px;text-align:center;">13</div><div class="r" style="left:4px;top:569px;width:29px;height:1px;background:#d8d8d8;"></div><div class="t" style="top:551.46px;font-size:16px;line-height:16px;color:#333;left:-283.50px;width:600px;text-align:center;">14</div><div class="r" style="left:4px;top:593px;width:29px;height:1px;background:#d8d8d8;"></div><div class="t" style="top:575.46px;font-size:16px;line-height:16px;color:#333;left:-283.50px;width:600px;text-align:center;">15</div><div class="r" style="left:4px;top:617px;width:29px;height:1px;background:#d8d8d8;"></div><div class="t" style="top:599.46px;font-size:16px;line-height:16px;color:#333;left:-283.50px;width:600px;text-align:center;">16</div><div class="r" style="left:4px;top:641px;width:29px;height:1px;background:#d8d8d8;"></div><div class="t" style="top:623.46px;font-size:16px;line-height:16px;color:#333;left:-283.50px;width:600px;text-align:center;">17</div><div class="r" style="left:4px;top:665px;width:29px;height:1px;background:#d8d8d8;"></div><div class="t" style="top:647.46px;font-size:16px;line-height:16px;color:#333;left:-283.50px;width:600px;text-align:center;">18</div><div class="r" style="left:4px;top:689px;width:29px;height:1px;background:#d8d8d8;"></div><div class="t" style="top:671.46px;font-size:16px;line-height:16px;color:#333;left:-283.50px;width:600px;text-align:center;">19</div><div class="r" style="left:4px;top:713px;width:29px;height:1px;background:#d8d8d8;"></div><div class="t" style="top:695.46px;font-size:16px;line-height:16px;color:#333;left:-283.50px;width:600px;text-align:center;">20</div><div class="r" style="left:4px;top:737px;width:29px;height:1px;background:#d8d8d8;"></div><div class="t" style="top:719.46px;font-size:16px;line-height:16px;color:#333;left:-283.50px;width:600px;text-align:center;">21</div><div class="r" style="left:4px;top:761px;width:29px;height:1px;background:#d8d8d8;"></div><div class="t" style="top:743.46px;font-size:16px;line-height:16px;color:#333;left:-283.50px;width:600px;text-align:center;">22</div><div class="r" style="left:4px;top:785px;width:29px;height:1px;background:#d8d8d8;"></div><div class="t" style="top:767.46px;font-size:16px;line-height:16px;color:#333;left:-283.50px;width:600px;text-align:center;">23</div><div class="r" style="left:4px;top:809px;width:29px;height:1px;background:#d8d8d8;"></div><div class="t" style="top:791.46px;font-size:16px;line-height:16px;color:#333;left:-283.50px;width:600px;text-align:center;">24</div><div class="r" style="left:4px;top:833px;width:29px;height:1px;background:#d8d8d8;"></div><div class="t" style="top:815.46px;font-size:16px;line-height:16px;color:#333;left:-283.50px;width:600px;text-align:center;">25</div><div class="r" style="left:4px;top:857px;width:29px;height:1px;background:#d8d8d8;"></div><div class="t" style="top:839.46px;font-size:16px;line-height:16px;color:#333;left:-283.50px;width:600px;text-align:center;">26</div><div class="r" style="left:4px;top:881px;width:29px;height:1px;background:#d8d8d8;"></div><div class="t" style="top:863.46px;font-size:16px;line-height:16px;color:#333;left:-283.50px;width:600px;text-align:center;">27</div><div class="r" style="left:4px;top:905px;width:29px;height:1px;background:#d8d8d8;"></div><div class="t" style="top:887.46px;font-size:16px;line-height:16px;color:#333;left:-283.50px;width:600px;text-align:center;">28</div><div class="r" style="left:135px;top:233px;width:1px;height:660px;background:#e1e1e1;"></div><div class="r" style="left:244px;top:233px;width:1px;height:660px;background:#e1e1e1;"></div><div class="r" style="left:324px;top:233px;width:1px;height:660px;background:#e1e1e1;"></div><div class="r" style="left:564px;top:233px;width:1px;height:660px;background:#e1e1e1;"></div><div class="r" style="left:965px;top:233px;width:1px;height:660px;background:#e1e1e1;"></div><div class="r" style="left:1400px;top:233px;width:1px;height:660px;background:#e1e1e1;"></div><div class="r" style="left:33px;top:257px;width:1400px;height:1px;background:#e1e1e1;"></div><div class="r" style="left:33px;top:281px;width:1400px;height:1px;background:#e1e1e1;"></div><div class="r" style="left:33px;top:305px;width:1400px;height:1px;background:#e1e1e1;"></div><div class="r" style="left:33px;top:329px;width:1400px;height:1px;background:#e1e1e1;"></div><div class="r" style="left:33px;top:353px;width:1400px;height:1px;background:#e1e1e1;"></div><div class="r" style="left:33px;top:377px;width:1400px;height:1px;background:#e1e1e1;"></div><div class="r" style="left:33px;top:401px;width:1400px;height:1px;background:#e1e1e1;"></div><div class="r" style="left:33px;top:425px;width:1400px;height:1px;background:#e1e1e1;"></div><div class="r" style="left:33px;top:449px;width:1400px;height:1px;background:#e1e1e1;"></div><div class="r" style="left:33px;top:473px;width:1400px;height:1px;background:#e1e1e1;"></div><div class="r" style="left:33px;top:497px;width:1400px;height:1px;background:#e1e1e1;"></div><div class="r" style="left:33px;top:521px;width:1400px;height:1px;background:#e1e1e1;"></div><div class="r" style="left:33px;top:545px;width:1400px;height:1px;background:#e1e1e1;"></div><div class="r" style="left:33px;top:569px;width:1400px;height:1px;background:#e1e1e1;"></div><div class="r" style="left:33px;top:593px;width:1400px;height:1px;background:#e1e1e1;"></div><div class="r" style="left:33px;top:617px;width:1400px;height:1px;background:#e1e1e1;"></div><div class="r" style="left:33px;top:641px;width:1400px;height:1px;background:#e1e1e1;"></div><div class="r" style="left:33px;top:665px;width:1400px;height:1px;background:#e1e1e1;"></div><div class="r" style="left:33px;top:689px;width:1400px;height:1px;background:#e1e1e1;"></div><div class="r" style="left:33px;top:713px;width:1400px;height:1px;background:#e1e1e1;"></div><div class="r" style="left:33px;top:737px;width:1400px;height:1px;background:#e1e1e1;"></div><div class="r" style="left:33px;top:761px;width:1400px;height:1px;background:#e1e1e1;"></div><div class="r" style="left:33px;top:785px;width:1400px;height:1px;background:#e1e1e1;"></div><div class="r" style="left:33px;top:809px;width:1400px;height:1px;background:#e1e1e1;"></div><div class="r" style="left:33px;top:833px;width:1400px;height:1px;background:#e1e1e1;"></div><div class="r" style="left:33px;top:857px;width:1400px;height:1px;background:#e1e1e1;"></div><div class="r" style="left:33px;top:881px;width:1400px;height:1px;background:#e1e1e1;"></div><div class="r" style="left:33px;top:905px;width:1400px;height:1px;background:#e1e1e1;"></div><div class="r" style="left:34px;top:234px;width:931px;height:24px;background:#2e6b94;"></div><div class="t" style="top:239.06px;font-size:16px;line-height:16px;color:#fff;left:36.80px;">Date</div><div class="t" style="top:239.06px;font-size:16px;line-height:16px;color:#fff;left:138.80px;">Worksheet</div><div class="t" style="top:239.06px;font-size:16px;line-height:16px;color:#fff;left:247.90px;">Location</div><div class="t" style="top:239.06px;font-size:16px;line-height:16px;color:#fff;left:327.60px;">Change</div><div class="t" style="top:239.06px;font-size:16px;line-height:16px;color:#fff;left:567.80px;">Reason</div><div class="t" style="top:262.76px;font-size:16px;line-height:16px;color:#000;left:138.80px;">Income</div><div class="t" style="top:262.76px;font-size:16px;line-height:16px;color:#000;left:247.90px;">C4</div><div class="t" style="top:262.76px;font-size:16px;line-height:16px;color:#000;left:327.60px;transform:scaleX(1.0093);transform-origin:0 0;">Formula changed to value</div><div class="t" style="top:262.76px;font-size:16px;line-height:16px;color:#000;left:567.80px;transform:scaleX(1.0238);transform-origin:0 0;">Link to external document was disabled</div><div class="t" style="top:262.76px;font-size:16px;line-height:16px;color:#000;right:calc(100% - 131.00px);">12-7-2023</div><div class="r" style="left:135px;top:283px;width:1400px;height:21px;background:#c6c6c6;"></div><div class="r" style="left:244px;top:283px;width:1px;height:21px;background:#adadad;"></div><div class="r" style="left:324px;top:283px;width:1px;height:21px;background:#adadad;"></div><div class="r" style="left:564px;top:283px;width:1px;height:21px;background:#adadad;"></div><div class="r" style="left:965px;top:283px;width:1px;height:21px;background:#adadad;"></div><div class="t" style="top:286.56px;font-size:16px;line-height:16px;color:#000;left:138.80px;">Income</div><div class="t" style="top:286.56px;font-size:16px;line-height:16px;color:#000;left:247.90px;">Row 7</div><div class="t" style="top:286.56px;font-size:16px;line-height:16px;color:#000;left:327.60px;transform:scaleX(1.0238);transform-origin:0 0;">Unhid row 7</div><div class="t" style="top:286.56px;font-size:16px;line-height:16px;color:#000;left:567.80px;transform:scaleX(1.0094);transform-origin:0 0;">Row was hidden; value invisible</div><div class="r" style="left:33px;top:280px;width:1400px;height:2px;background:#1e7145;"></div><div class="r" style="left:33px;top:305px;width:1400px;height:2px;background:#1e7145;"></div><div class="r" style="left:32px;top:280px;width:2px;height:27px;background:#1e7145;"></div><div class="r" style="left:32px;top:303px;width:6px;height:5px;background:#1e7145;"></div><div class="r" style="left:33px;top:232px;width:1400px;height:2px;background:#1e7145;"></div><div class="r" style="left:0px;top:892px;width:1400px;height:41px;background:#e3e3e3;"></div><div class="r" style="left:0px;top:933px;width:1400px;height:3px;background:#fafafa;"></div><svg class="s" style="left:31px;top:906px;" width="10" height="13" viewBox="0 0 10 13"><polyline points="8,1 2,6.5 8,12" fill="none" stroke="#9a9a9a" stroke-width="1.3"/></svg><svg class="s" style="left:71px;top:906px;" width="10" height="13" viewBox="0 0 10 13"><polyline points="2,1 8,6.5 2,12" fill="none" stroke="#9a9a9a" stroke-width="1.3"/></svg><div class="r" style="left:140.7px;top:898px;width:95.20000000000002px;height:29.5px;background:#2e6b94;border-radius:6px;"></div><div class="t" style="top:906.31px;font-size:17px;line-height:17px;color:#fff;left:152.00px;transform:scaleX(0.9982);transform-origin:0 0;">Summary</div><div class="r" style="left:241.4px;top:901px;width:1px;height:24px;background:#cfcfcf;"></div><div class="r" style="left:236px;top:892px;width:165px;height:9px;background:#fff;"></div><div class="r" style="left:236px;top:892px;width:9px;height:9px;background:#e3e3e3;border-top-right-radius:7px;"></div><div class="r" style="left:392px;top:892px;width:9px;height:9px;background:#e3e3e3;border-top-left-radius:7px;"></div><div class="r" style="left:245px;top:889px;width:147px;height:40px;background:#fff;border-radius:0 0 7px 7px;"></div><div class="r" style="left:247px;top:893px;width:143px;height:34.5px;background:linear-gradient(#fff 0%,#f4f8fa 15%,#d3e0e8 45%,#bdd0dc 80%,#b3c7d3 100%);border-radius:0 0 6px 6px;"></div><div class="t" style="top:901.39px;font-size:17.5px;line-height:17.5px;color:#1a1a1a;left:258.00px;transform:scaleX(1.0450);transform-origin:0 0;-webkit-text-stroke:0.35px #1a1a1a;">Documentation</div><div class="r" style="left:257px;top:923px;width:123px;height:2px;background:#1e7145;"></div><div class="r" style="left:395.5px;top:901px;width:1px;height:24px;background:#cfcfcf;"></div><div class="r" style="left:401.3px;top:898px;width:78.30000000000001px;height:29.5px;background:#2e6b94;border-radius:6px;"></div><div class="t" style="top:906.31px;font-size:17px;line-height:17px;color:#fff;left:412.60px;transform:scaleX(1.0046);transform-origin:0 0;">Income</div><div class="r" style="left:485.1px;top:901px;width:1px;height:24px;background:#cfcfcf;"></div><div class="r" style="left:491.1px;top:898px;width:91.29999999999995px;height:29.5px;background:#2e6b94;border-radius:6px;"></div><div class="t" style="top:906.31px;font-size:17px;line-height:17px;color:#fff;left:502.40px;transform:scaleX(0.9296);transform-origin:0 0;">Expenses</div><div class="r" style="left:587.9px;top:901px;width:1px;height:24px;background:#cfcfcf;"></div><div class="r" style="left:594px;top:898px;width:97.20000000000005px;height:29.5px;background:#2e6b94;border-radius:6px;"></div><div class="t" style="top:906.31px;font-size:17px;line-height:17px;color:#fff;left:605.30px;transform:scaleX(0.9877);transform-origin:0 0;">Personnel</div><div class="r" style="left:696.7px;top:901px;width:1px;height:24px;background:#cfcfcf;"></div><div class="r" style="left:703px;top:898px;width:99.60000000000002px;height:29.5px;background:#2e6b94;border-radius:6px;"></div><div class="t" style="top:906.31px;font-size:17px;line-height:17px;color:#fff;left:714.30px;transform:scaleX(1.0274);transform-origin:0 0;">Operating</div><svg class="s" style="left:861px;top:905px;" width="16" height="16" viewBox="0 0 16 16"><path d="M8,1 V15 M1,8 H15" stroke="#333" stroke-width="1.5"/></svg></div></div></div></body></html>
